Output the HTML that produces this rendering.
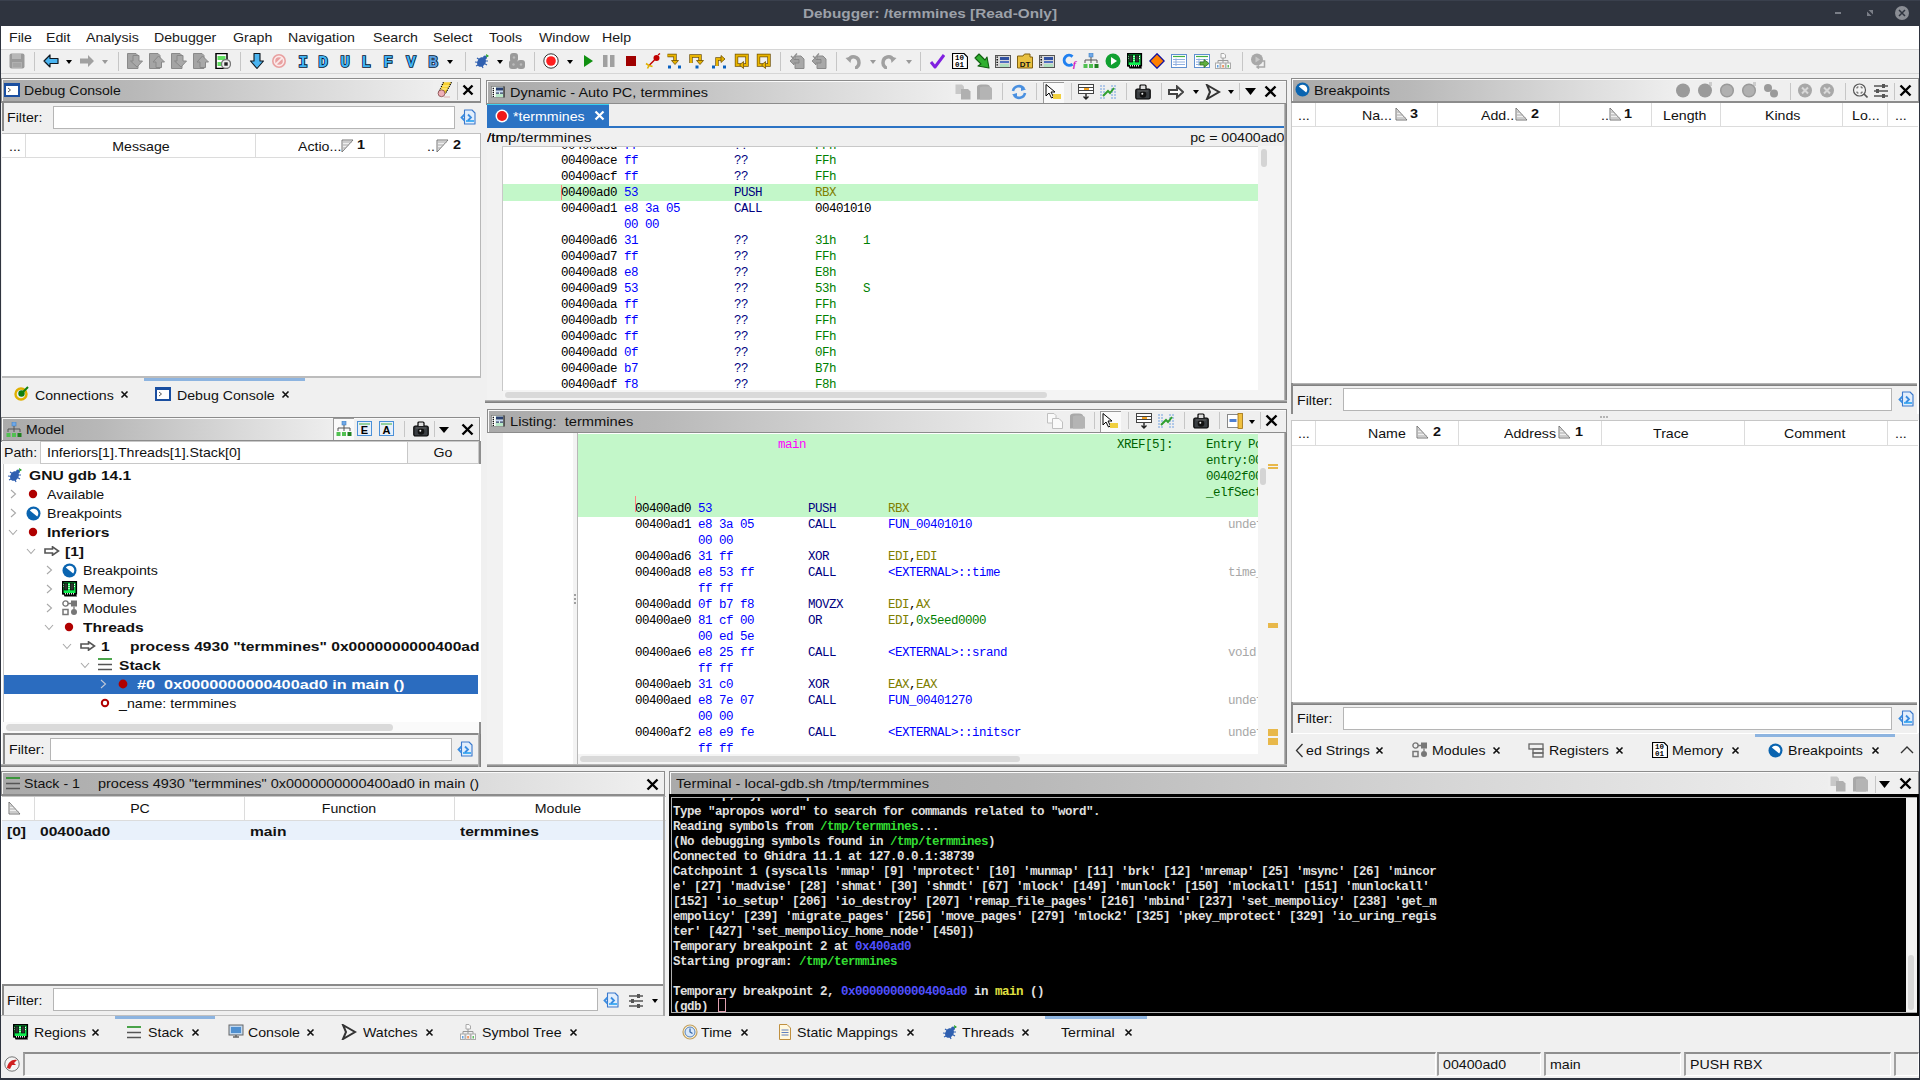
<!DOCTYPE html><html><head><meta charset="utf-8"><style>
html,body{margin:0;padding:0;width:1920px;height:1080px;overflow:hidden;background:#f0f0f0;font-family:"Liberation Sans",sans-serif;}
div,svg{position:absolute;box-sizing:border-box;}
</style></head><body>
<div style="left:0px;top:0px;width:1920px;height:26px;background:#2f343f;"></div>
<div style="left:430px;width:1000px;text-align:center;top:7.00px;font-size:13px;line-height:13px;color:#9da1a9;font-weight:700;font-family:'Liberation Sans', sans-serif;letter-spacing:0px;white-space:pre;transform:scaleX(1.18);transform-origin:50% 0;">Debugger: /termmines [Read-Only]</div>
<div style="left:0px;top:0px;width:1920px;height:1px;background:#3a404d;"></div>
<div style="left:1835px;top:12px;width:6px;height:2px;background:#7a7e87;"></div>
<svg style="left:1866px;top:9px" width="8" height="8" viewBox="0 0 8 8"><path d="M1 7 V2.5 L5.5 7 Z M7 1 V5.5 L2.5 1 Z" fill="#7a7e87"/></svg>
<svg style="left:1894px;top:5px" width="16" height="16" viewBox="0 0 16 16"><circle cx="8" cy="8" r="7" fill="#8a8d94"/><path d="M5 5 L11 11 M11 5 L5 11" stroke="#2f343f" stroke-width="1.5"/></svg>
<div style="left:0px;top:26px;width:1px;height:1054px;background:#2f343f;"></div>
<div style="left:1919px;top:26px;width:1px;height:1054px;background:#2f343f;"></div>
<div style="left:0px;top:1078px;width:1920px;height:2px;background:#2f343f;"></div>
<div style="left:1px;top:26px;width:1918px;height:23px;background:#ffffff;"></div>
<div style="left:9px;top:31.00px;font-size:13px;line-height:13px;color:#1a1a1a;font-weight:400;font-family:'Liberation Sans', sans-serif;letter-spacing:0px;white-space:pre;transform:scaleX(1.09);transform-origin:0 0;">File</div>
<div style="left:46px;top:31.00px;font-size:13px;line-height:13px;color:#1a1a1a;font-weight:400;font-family:'Liberation Sans', sans-serif;letter-spacing:0px;white-space:pre;transform:scaleX(1.09);transform-origin:0 0;">Edit</div>
<div style="left:86px;top:31.00px;font-size:13px;line-height:13px;color:#1a1a1a;font-weight:400;font-family:'Liberation Sans', sans-serif;letter-spacing:0px;white-space:pre;transform:scaleX(1.09);transform-origin:0 0;">Analysis</div>
<div style="left:154px;top:31.00px;font-size:13px;line-height:13px;color:#1a1a1a;font-weight:400;font-family:'Liberation Sans', sans-serif;letter-spacing:0px;white-space:pre;transform:scaleX(1.09);transform-origin:0 0;">Debugger</div>
<div style="left:233px;top:31.00px;font-size:13px;line-height:13px;color:#1a1a1a;font-weight:400;font-family:'Liberation Sans', sans-serif;letter-spacing:0px;white-space:pre;transform:scaleX(1.09);transform-origin:0 0;">Graph</div>
<div style="left:288px;top:31.00px;font-size:13px;line-height:13px;color:#1a1a1a;font-weight:400;font-family:'Liberation Sans', sans-serif;letter-spacing:0px;white-space:pre;transform:scaleX(1.09);transform-origin:0 0;">Navigation</div>
<div style="left:373px;top:31.00px;font-size:13px;line-height:13px;color:#1a1a1a;font-weight:400;font-family:'Liberation Sans', sans-serif;letter-spacing:0px;white-space:pre;transform:scaleX(1.09);transform-origin:0 0;">Search</div>
<div style="left:433px;top:31.00px;font-size:13px;line-height:13px;color:#1a1a1a;font-weight:400;font-family:'Liberation Sans', sans-serif;letter-spacing:0px;white-space:pre;transform:scaleX(1.09);transform-origin:0 0;">Select</div>
<div style="left:489px;top:31.00px;font-size:13px;line-height:13px;color:#1a1a1a;font-weight:400;font-family:'Liberation Sans', sans-serif;letter-spacing:0px;white-space:pre;transform:scaleX(1.09);transform-origin:0 0;">Tools</div>
<div style="left:539px;top:31.00px;font-size:13px;line-height:13px;color:#1a1a1a;font-weight:400;font-family:'Liberation Sans', sans-serif;letter-spacing:0px;white-space:pre;transform:scaleX(1.09);transform-origin:0 0;">Window</div>
<div style="left:602px;top:31.00px;font-size:13px;line-height:13px;color:#1a1a1a;font-weight:400;font-family:'Liberation Sans', sans-serif;letter-spacing:0px;white-space:pre;transform:scaleX(1.09);transform-origin:0 0;">Help</div>
<div style="left:1px;top:49px;width:1918px;height:1px;background:#d6d6d6;"></div>
<div style="left:1px;top:50px;width:1918px;height:23px;background:#f0f0f0;"></div>
<div style="left:1px;top:73px;width:1918px;height:1px;background:#d6d6d6;"></div>
<div style="left:1px;top:78px;width:481px;height:300px;background:#f0f0f0;"></div>
<div style="left:1px;top:78px;width:480px;height:25px;background:#8c8c8c;"></div>
<div style="left:2px;top:79px;width:478px;height:22px;background:#fafafa;"></div>
<div style="left:3px;top:80px;width:477px;height:21px;background:#efefef;"></div>
<div style="left:3px;top:80px;width:430px;height:21px;background:linear-gradient(to right,#aaaaaa 0%,#b8b8b8 30%,#d8d8d8 70%,#eeeeee 100%);"></div>
<div style="left:2px;top:101px;width:479px;height:2px;background:#8c8c8c;"></div>
<div style="left:24px;top:84.00px;font-size:13px;line-height:13px;color:#111;font-weight:400;font-family:'Liberation Sans', sans-serif;letter-spacing:0px;white-space:pre;transform:scaleX(1.08);transform-origin:0 0;">Debug Console</div>
<div style="left:2px;top:103px;width:478px;height:28px;background:#f0f0f0;"></div>
<div style="left:2px;top:103px;width:2px;height:28px;background:#8a8a8a;"></div>
<div style="left:7px;top:111.00px;font-size:13px;line-height:13px;color:#111;font-weight:400;font-family:'Liberation Sans', sans-serif;letter-spacing:0px;white-space:pre;transform:scaleX(1.09);transform-origin:0 0;">Filter:</div>
<div style="left:53px;top:106px;width:402px;height:23px;background:#fff;border:1px solid #b5b5b5;"></div>
<div style="left:2px;top:133px;width:479px;height:245px;background:#fff;border-top:1px solid #c0c0c0;border-right:1px solid #b8b8b8;border-bottom:2px solid #bcbcbc;"></div>
<div style="left:2px;top:134px;width:478px;height:24px;background:#fff;"></div>
<div style="left:2px;top:157px;width:478px;height:1px;background:#dcdcdc;"></div>
<div style="left:25px;top:134px;width:1px;height:23px;background:#dcdcdc;"></div>
<div style="left:255px;top:134px;width:1px;height:23px;background:#dcdcdc;"></div>
<div style="left:384px;top:134px;width:1px;height:23px;background:#dcdcdc;"></div>
<div style="left:9px;top:140.00px;font-size:13px;line-height:13px;color:#111;font-weight:400;font-family:'Liberation Sans', sans-serif;letter-spacing:0px;white-space:pre;transform:scaleX(1.09);transform-origin:0 0;">...</div>
<div style="left:-359px;width:1000px;text-align:center;top:140.00px;font-size:13px;line-height:13px;color:#111;font-weight:400;font-family:'Liberation Sans', sans-serif;letter-spacing:0px;white-space:pre;transform:scaleX(1.09);transform-origin:50% 0;">Message</div>
<div style="left:298px;top:140.00px;font-size:13px;line-height:13px;color:#111;font-weight:400;font-family:'Liberation Sans', sans-serif;letter-spacing:0px;white-space:pre;transform:scaleX(1.09);transform-origin:0 0;">Actio...</div>
<div style="left:427px;top:140.00px;font-size:13px;line-height:13px;color:#111;font-weight:400;font-family:'Liberation Sans', sans-serif;letter-spacing:0px;white-space:pre;transform:scaleX(1.09);transform-origin:0 0;">..</div>
<div style="left:2px;top:378px;width:479px;height:33px;background:#f0f0f0;"></div>
<div style="left:144px;top:378px;width:161px;height:3px;background:#8db4e0;"></div>
<div style="left:35px;top:389.00px;font-size:13px;line-height:13px;color:#111;font-weight:400;font-family:'Liberation Sans', sans-serif;letter-spacing:0px;white-space:pre;transform:scaleX(1.09);transform-origin:0 0;">Connections</div>
<div style="left:177px;top:389.00px;font-size:13px;line-height:13px;color:#111;font-weight:400;font-family:'Liberation Sans', sans-serif;letter-spacing:0px;white-space:pre;transform:scaleX(1.09);transform-origin:0 0;">Debug Console</div>
<div style="left:1px;top:417px;width:480px;height:350px;background:#ffffff;"></div>
<div style="left:1px;top:417px;width:479px;height:25px;background:#8c8c8c;"></div>
<div style="left:2px;top:418px;width:477px;height:22px;background:#fafafa;"></div>
<div style="left:3px;top:419px;width:476px;height:21px;background:#efefef;"></div>
<div style="left:3px;top:419px;width:330px;height:21px;background:linear-gradient(to right,#aaaaaa 0%,#b8b8b8 30%,#d8d8d8 70%,#eeeeee 100%);"></div>
<div style="left:2px;top:440px;width:478px;height:2px;background:#8c8c8c;"></div>
<div style="left:26px;top:423.00px;font-size:13px;line-height:13px;color:#111;font-weight:400;font-family:'Liberation Sans', sans-serif;letter-spacing:0px;white-space:pre;transform:scaleX(1.08);transform-origin:0 0;">Model</div>
<div style="left:2px;top:441px;width:477px;height:23px;background:#f0f0f0;"></div>
<div style="left:4px;top:446.00px;font-size:13px;line-height:13px;color:#111;font-weight:400;font-family:'Liberation Sans', sans-serif;letter-spacing:0px;white-space:pre;transform:scaleX(1.09);transform-origin:0 0;">Path:</div>
<div style="left:40px;top:441px;width:368px;height:23px;background:#fff;border:1px solid #c8c8c8;"></div>
<div style="left:47px;top:446.00px;font-size:13px;line-height:13px;color:#111;font-weight:400;font-family:'Liberation Sans', sans-serif;letter-spacing:0px;white-space:pre;transform:scaleX(1.09);transform-origin:0 0;">Inferiors[1].Threads[1].Stack[0]</div>
<div style="left:407px;top:441px;width:72px;height:23px;background:#f4f4f4;border:1px solid #c8c8c8;"></div>
<div style="left:-57px;width:1000px;text-align:center;top:446.00px;font-size:13px;line-height:13px;color:#111;font-weight:400;font-family:'Liberation Sans', sans-serif;letter-spacing:0px;white-space:pre;transform:scaleX(1.09);transform-origin:50% 0;">Go</div>
<div style="left:2px;top:464px;width:477px;height:270px;background:#fff;"></div>
<div style="left:4px;top:675px;width:474px;height:19px;background:#2b6cbf;"></div>
<div style="left:29px;top:469.00px;font-size:13px;line-height:13px;color:#111;font-weight:700;font-family:'Liberation Sans', sans-serif;letter-spacing:0px;white-space:pre;transform:scaleX(1.2);transform-origin:0 0;">GNU gdb 14.1</div>
<div style="left:47px;top:488.00px;font-size:13px;line-height:13px;color:#111;font-weight:400;font-family:'Liberation Sans', sans-serif;letter-spacing:0px;white-space:pre;transform:scaleX(1.09);transform-origin:0 0;">Available</div>
<div style="left:47px;top:507.00px;font-size:13px;line-height:13px;color:#111;font-weight:400;font-family:'Liberation Sans', sans-serif;letter-spacing:0px;white-space:pre;transform:scaleX(1.09);transform-origin:0 0;">Breakpoints</div>
<div style="left:47px;top:526.00px;font-size:13px;line-height:13px;color:#111;font-weight:700;font-family:'Liberation Sans', sans-serif;letter-spacing:0px;white-space:pre;transform:scaleX(1.2);transform-origin:0 0;">Inferiors</div>
<div style="left:65px;top:545.00px;font-size:13px;line-height:13px;color:#111;font-weight:700;font-family:'Liberation Sans', sans-serif;letter-spacing:0px;white-space:pre;transform:scaleX(1.2);transform-origin:0 0;">[1]</div>
<div style="left:83px;top:564.00px;font-size:13px;line-height:13px;color:#111;font-weight:400;font-family:'Liberation Sans', sans-serif;letter-spacing:0px;white-space:pre;transform:scaleX(1.09);transform-origin:0 0;">Breakpoints</div>
<div style="left:83px;top:583.00px;font-size:13px;line-height:13px;color:#111;font-weight:400;font-family:'Liberation Sans', sans-serif;letter-spacing:0px;white-space:pre;transform:scaleX(1.09);transform-origin:0 0;">Memory</div>
<div style="left:83px;top:602.00px;font-size:13px;line-height:13px;color:#111;font-weight:400;font-family:'Liberation Sans', sans-serif;letter-spacing:0px;white-space:pre;transform:scaleX(1.09);transform-origin:0 0;">Modules</div>
<div style="left:83px;top:621.00px;font-size:13px;line-height:13px;color:#111;font-weight:700;font-family:'Liberation Sans', sans-serif;letter-spacing:0px;white-space:pre;transform:scaleX(1.2);transform-origin:0 0;">Threads</div>
<div style="left:101px;top:640.00px;font-size:13px;line-height:13px;color:#111;font-weight:700;font-family:'Liberation Sans', sans-serif;letter-spacing:0px;white-space:pre;transform:scaleX(1.2);transform-origin:0 0;">1</div>
<div style="left:130px;top:640.00px;font-size:13px;line-height:13px;color:#111;font-weight:700;font-family:'Liberation Sans', sans-serif;letter-spacing:0px;white-space:pre;transform:scaleX(1.2);transform-origin:0 0;">process 4930 &quot;termmines&quot; 0x0000000000400ad0 in main ()</div>
<div style="left:119px;top:659.00px;font-size:13px;line-height:13px;color:#111;font-weight:700;font-family:'Liberation Sans', sans-serif;letter-spacing:0px;white-space:pre;transform:scaleX(1.2);transform-origin:0 0;">Stack</div>
<div style="left:119px;top:697.00px;font-size:13px;line-height:13px;color:#111;font-weight:400;font-family:'Liberation Sans', sans-serif;letter-spacing:0px;white-space:pre;transform:scaleX(1.09);transform-origin:0 0;">_name: termmines</div>
<div style="left:137px;top:678.00px;font-size:13px;line-height:13px;color:#ffffff;font-weight:700;font-family:'Liberation Sans', sans-serif;letter-spacing:0px;white-space:pre;transform:scaleX(1.25);transform-origin:0 0;">#0  0x0000000000400ad0 in main ()</div>
<div style="left:479px;top:464px;width:2px;height:270px;background:#fff;"></div>
<div style="left:2px;top:722px;width:477px;height:12px;background:#fafafa;"></div>
<div style="left:6px;top:724px;width:387px;height:7px;background:#dadada;border-radius:4px;"></div>
<div style="left:2px;top:733px;width:479px;height:31px;background:#f0f0f0;"></div>
<div style="left:3px;top:733px;width:478px;height:2px;background:#8a8a8a;"></div>
<div style="left:3px;top:733px;width:2px;height:31px;background:#8a8a8a;"></div>
<div style="left:1px;top:764px;width:481px;height:3px;background:linear-gradient(to bottom,#c4c4c4,#8a8a8a 60%,#7a7a7a);"></div>
<div style="left:478px;top:733px;width:3px;height:34px;background:linear-gradient(to right,#c4c4c4,#8a8a8a 60%,#7a7a7a);"></div>
<div style="left:479px;top:441px;width:2px;height:293px;background:#8e8e8e;"></div>
<div style="left:9px;top:743.00px;font-size:13px;line-height:13px;color:#111;font-weight:400;font-family:'Liberation Sans', sans-serif;letter-spacing:0px;white-space:pre;transform:scaleX(1.09);transform-origin:0 0;">Filter:</div>
<div style="left:50px;top:738px;width:402px;height:23px;background:#fff;border:1px solid #b5b5b5;"></div>
<div style="left:486px;top:104px;width:801px;height:299px;background:#f0f0f0;"></div>
<div style="left:486px;top:80px;width:801px;height:25px;background:#8c8c8c;"></div>
<div style="left:487px;top:81px;width:799px;height:22px;background:#fafafa;"></div>
<div style="left:488px;top:82px;width:798px;height:21px;background:#efefef;"></div>
<div style="left:488px;top:82px;width:463px;height:21px;background:linear-gradient(to right,#aaaaaa 0%,#b8b8b8 30%,#d8d8d8 70%,#eeeeee 100%);"></div>
<div style="left:487px;top:103px;width:800px;height:2px;background:#8c8c8c;"></div>
<div style="left:510px;top:86.00px;font-size:13px;line-height:13px;color:#111;font-weight:400;font-family:'Liberation Sans', sans-serif;letter-spacing:0px;white-space:pre;transform:scaleX(1.114);transform-origin:0 0;">Dynamic - Auto PC, termmines</div>
<div style="left:487px;top:104px;width:799px;height:24px;background:#efefef;"></div>
<div style="left:487px;top:104px;width:122px;height:24px;background:#2b73c4;"></div>
<div style="left:487px;top:104px;width:122px;height:1px;background:#3cd0f0;"></div>
<div style="left:487px;top:126px;width:799px;height:2px;background:#2b73c4;"></div>
<div style="left:513px;top:110.00px;font-size:13px;line-height:13px;color:#ffffff;font-weight:400;font-family:'Liberation Sans', sans-serif;letter-spacing:0px;white-space:pre;transform:scaleX(1.09);transform-origin:0 0;">*termmines</div>
<div style="left:487px;top:131.00px;font-size:13px;line-height:13px;color:#111;font-weight:400;font-family:'Liberation Sans', sans-serif;letter-spacing:0px;white-space:pre;transform:scaleX(1.168);transform-origin:0 0;">/tmp/termmines</div>
<div style="right:636px;top:131.00px;font-size:13px;line-height:13px;color:#111;font-weight:400;font-family:'Liberation Sans', sans-serif;letter-spacing:0px;white-space:pre;transform:scaleX(1.09);transform-origin:100% 0;">pc = 00400ad0</div>
<div style="left:487px;top:146px;width:16px;height:254px;background:#f2f2f2;"></div>
<div style="left:503px;top:146px;width:755px;height:245px;background:#ffffff;"></div>
<div style="left:1258px;top:146px;width:26px;height:245px;background:#f4f4f4;"></div>
<div style="left:1261px;top:149px;width:6px;height:18px;background:#d4d4d4;border-radius:3px;"></div>
<div style="left:503px;top:390px;width:781px;height:10px;background:#f4f4f4;"></div>
<div style="left:505px;top:392px;width:542px;height:6px;background:#d9d9d9;border-radius:3px;"></div>
<div style="left:503px;top:184px;width:755px;height:17px;background:#c3f7c9;"></div>
<div style="left:561px;top:185px;width:1px;height:15px;background:#ff8080;"></div>
<div style="left:561px;top:140.42px;font-size:12.5px;line-height:12.5px;color:#000;font-weight:400;font-family:'Liberation Mono', monospace;letter-spacing:-0.5px;white-space:pre;transform-origin:0 0;">00400acd</div>
<div style="left:624px;top:140.42px;font-size:12.5px;line-height:12.5px;color:#0000ff;font-weight:400;font-family:'Liberation Mono', monospace;letter-spacing:-0.5px;white-space:pre;transform-origin:0 0;">ff</div>
<div style="left:734px;top:140.42px;font-size:12.5px;line-height:12.5px;color:#000080;font-weight:400;font-family:'Liberation Mono', monospace;letter-spacing:-0.5px;white-space:pre;transform-origin:0 0;">??</div>
<div style="left:815px;top:140.42px;font-size:12.5px;line-height:12.5px;color:#008000;font-weight:400;font-family:'Liberation Mono', monospace;letter-spacing:-0.5px;white-space:pre;transform-origin:0 0;">FFh</div>
<div style="left:561px;top:155.42px;font-size:12.5px;line-height:12.5px;color:#000;font-weight:400;font-family:'Liberation Mono', monospace;letter-spacing:-0.5px;white-space:pre;transform-origin:0 0;">00400ace</div>
<div style="left:624px;top:155.42px;font-size:12.5px;line-height:12.5px;color:#0000ff;font-weight:400;font-family:'Liberation Mono', monospace;letter-spacing:-0.5px;white-space:pre;transform-origin:0 0;">ff</div>
<div style="left:734px;top:155.42px;font-size:12.5px;line-height:12.5px;color:#000080;font-weight:400;font-family:'Liberation Mono', monospace;letter-spacing:-0.5px;white-space:pre;transform-origin:0 0;">??</div>
<div style="left:815px;top:155.42px;font-size:12.5px;line-height:12.5px;color:#008000;font-weight:400;font-family:'Liberation Mono', monospace;letter-spacing:-0.5px;white-space:pre;transform-origin:0 0;">FFh</div>
<div style="left:561px;top:171.42px;font-size:12.5px;line-height:12.5px;color:#000;font-weight:400;font-family:'Liberation Mono', monospace;letter-spacing:-0.5px;white-space:pre;transform-origin:0 0;">00400acf</div>
<div style="left:624px;top:171.42px;font-size:12.5px;line-height:12.5px;color:#0000ff;font-weight:400;font-family:'Liberation Mono', monospace;letter-spacing:-0.5px;white-space:pre;transform-origin:0 0;">ff</div>
<div style="left:734px;top:171.42px;font-size:12.5px;line-height:12.5px;color:#000080;font-weight:400;font-family:'Liberation Mono', monospace;letter-spacing:-0.5px;white-space:pre;transform-origin:0 0;">??</div>
<div style="left:815px;top:171.42px;font-size:12.5px;line-height:12.5px;color:#008000;font-weight:400;font-family:'Liberation Mono', monospace;letter-spacing:-0.5px;white-space:pre;transform-origin:0 0;">FFh</div>
<div style="left:561px;top:187.42px;font-size:12.5px;line-height:12.5px;color:#000;font-weight:400;font-family:'Liberation Mono', monospace;letter-spacing:-0.5px;white-space:pre;transform-origin:0 0;">00400ad0</div>
<div style="left:624px;top:187.42px;font-size:12.5px;line-height:12.5px;color:#0000ff;font-weight:400;font-family:'Liberation Mono', monospace;letter-spacing:-0.5px;white-space:pre;transform-origin:0 0;">53</div>
<div style="left:734px;top:187.42px;font-size:12.5px;line-height:12.5px;color:#000080;font-weight:400;font-family:'Liberation Mono', monospace;letter-spacing:-0.5px;white-space:pre;transform-origin:0 0;">PUSH</div>
<div style="left:815px;top:187.42px;font-size:12.5px;line-height:12.5px;color:#808000;font-weight:400;font-family:'Liberation Mono', monospace;letter-spacing:-0.5px;white-space:pre;transform-origin:0 0;">RBX</div>
<div style="left:561px;top:203.42px;font-size:12.5px;line-height:12.5px;color:#000;font-weight:400;font-family:'Liberation Mono', monospace;letter-spacing:-0.5px;white-space:pre;transform-origin:0 0;">00400ad1</div>
<div style="left:624px;top:203.42px;font-size:12.5px;line-height:12.5px;color:#0000ff;font-weight:400;font-family:'Liberation Mono', monospace;letter-spacing:-0.5px;white-space:pre;transform-origin:0 0;">e8 3a 05</div>
<div style="left:734px;top:203.42px;font-size:12.5px;line-height:12.5px;color:#000080;font-weight:400;font-family:'Liberation Mono', monospace;letter-spacing:-0.5px;white-space:pre;transform-origin:0 0;">CALL</div>
<div style="left:815px;top:203.42px;font-size:12.5px;line-height:12.5px;color:#000;font-weight:400;font-family:'Liberation Mono', monospace;letter-spacing:-0.5px;white-space:pre;transform-origin:0 0;">00401010</div>
<div style="left:624px;top:219.42px;font-size:12.5px;line-height:12.5px;color:#0000ff;font-weight:400;font-family:'Liberation Mono', monospace;letter-spacing:-0.5px;white-space:pre;transform-origin:0 0;">00 00</div>
<div style="left:561px;top:235.42px;font-size:12.5px;line-height:12.5px;color:#000;font-weight:400;font-family:'Liberation Mono', monospace;letter-spacing:-0.5px;white-space:pre;transform-origin:0 0;">00400ad6</div>
<div style="left:624px;top:235.42px;font-size:12.5px;line-height:12.5px;color:#0000ff;font-weight:400;font-family:'Liberation Mono', monospace;letter-spacing:-0.5px;white-space:pre;transform-origin:0 0;">31</div>
<div style="left:734px;top:235.42px;font-size:12.5px;line-height:12.5px;color:#000080;font-weight:400;font-family:'Liberation Mono', monospace;letter-spacing:-0.5px;white-space:pre;transform-origin:0 0;">??</div>
<div style="left:815px;top:235.42px;font-size:12.5px;line-height:12.5px;color:#008000;font-weight:400;font-family:'Liberation Mono', monospace;letter-spacing:-0.5px;white-space:pre;transform-origin:0 0;">31h</div>
<div style="left:863px;top:235.42px;font-size:12.5px;line-height:12.5px;color:#008000;font-weight:400;font-family:'Liberation Mono', monospace;letter-spacing:-0.5px;white-space:pre;transform-origin:0 0;">1</div>
<div style="left:561px;top:251.42px;font-size:12.5px;line-height:12.5px;color:#000;font-weight:400;font-family:'Liberation Mono', monospace;letter-spacing:-0.5px;white-space:pre;transform-origin:0 0;">00400ad7</div>
<div style="left:624px;top:251.42px;font-size:12.5px;line-height:12.5px;color:#0000ff;font-weight:400;font-family:'Liberation Mono', monospace;letter-spacing:-0.5px;white-space:pre;transform-origin:0 0;">ff</div>
<div style="left:734px;top:251.42px;font-size:12.5px;line-height:12.5px;color:#000080;font-weight:400;font-family:'Liberation Mono', monospace;letter-spacing:-0.5px;white-space:pre;transform-origin:0 0;">??</div>
<div style="left:815px;top:251.42px;font-size:12.5px;line-height:12.5px;color:#008000;font-weight:400;font-family:'Liberation Mono', monospace;letter-spacing:-0.5px;white-space:pre;transform-origin:0 0;">FFh</div>
<div style="left:561px;top:267.42px;font-size:12.5px;line-height:12.5px;color:#000;font-weight:400;font-family:'Liberation Mono', monospace;letter-spacing:-0.5px;white-space:pre;transform-origin:0 0;">00400ad8</div>
<div style="left:624px;top:267.42px;font-size:12.5px;line-height:12.5px;color:#0000ff;font-weight:400;font-family:'Liberation Mono', monospace;letter-spacing:-0.5px;white-space:pre;transform-origin:0 0;">e8</div>
<div style="left:734px;top:267.42px;font-size:12.5px;line-height:12.5px;color:#000080;font-weight:400;font-family:'Liberation Mono', monospace;letter-spacing:-0.5px;white-space:pre;transform-origin:0 0;">??</div>
<div style="left:815px;top:267.42px;font-size:12.5px;line-height:12.5px;color:#008000;font-weight:400;font-family:'Liberation Mono', monospace;letter-spacing:-0.5px;white-space:pre;transform-origin:0 0;">E8h</div>
<div style="left:561px;top:283.42px;font-size:12.5px;line-height:12.5px;color:#000;font-weight:400;font-family:'Liberation Mono', monospace;letter-spacing:-0.5px;white-space:pre;transform-origin:0 0;">00400ad9</div>
<div style="left:624px;top:283.42px;font-size:12.5px;line-height:12.5px;color:#0000ff;font-weight:400;font-family:'Liberation Mono', monospace;letter-spacing:-0.5px;white-space:pre;transform-origin:0 0;">53</div>
<div style="left:734px;top:283.42px;font-size:12.5px;line-height:12.5px;color:#000080;font-weight:400;font-family:'Liberation Mono', monospace;letter-spacing:-0.5px;white-space:pre;transform-origin:0 0;">??</div>
<div style="left:815px;top:283.42px;font-size:12.5px;line-height:12.5px;color:#008000;font-weight:400;font-family:'Liberation Mono', monospace;letter-spacing:-0.5px;white-space:pre;transform-origin:0 0;">53h</div>
<div style="left:863px;top:283.42px;font-size:12.5px;line-height:12.5px;color:#008000;font-weight:400;font-family:'Liberation Mono', monospace;letter-spacing:-0.5px;white-space:pre;transform-origin:0 0;">S</div>
<div style="left:561px;top:299.42px;font-size:12.5px;line-height:12.5px;color:#000;font-weight:400;font-family:'Liberation Mono', monospace;letter-spacing:-0.5px;white-space:pre;transform-origin:0 0;">00400ada</div>
<div style="left:624px;top:299.42px;font-size:12.5px;line-height:12.5px;color:#0000ff;font-weight:400;font-family:'Liberation Mono', monospace;letter-spacing:-0.5px;white-space:pre;transform-origin:0 0;">ff</div>
<div style="left:734px;top:299.42px;font-size:12.5px;line-height:12.5px;color:#000080;font-weight:400;font-family:'Liberation Mono', monospace;letter-spacing:-0.5px;white-space:pre;transform-origin:0 0;">??</div>
<div style="left:815px;top:299.42px;font-size:12.5px;line-height:12.5px;color:#008000;font-weight:400;font-family:'Liberation Mono', monospace;letter-spacing:-0.5px;white-space:pre;transform-origin:0 0;">FFh</div>
<div style="left:561px;top:315.42px;font-size:12.5px;line-height:12.5px;color:#000;font-weight:400;font-family:'Liberation Mono', monospace;letter-spacing:-0.5px;white-space:pre;transform-origin:0 0;">00400adb</div>
<div style="left:624px;top:315.42px;font-size:12.5px;line-height:12.5px;color:#0000ff;font-weight:400;font-family:'Liberation Mono', monospace;letter-spacing:-0.5px;white-space:pre;transform-origin:0 0;">ff</div>
<div style="left:734px;top:315.42px;font-size:12.5px;line-height:12.5px;color:#000080;font-weight:400;font-family:'Liberation Mono', monospace;letter-spacing:-0.5px;white-space:pre;transform-origin:0 0;">??</div>
<div style="left:815px;top:315.42px;font-size:12.5px;line-height:12.5px;color:#008000;font-weight:400;font-family:'Liberation Mono', monospace;letter-spacing:-0.5px;white-space:pre;transform-origin:0 0;">FFh</div>
<div style="left:561px;top:331.42px;font-size:12.5px;line-height:12.5px;color:#000;font-weight:400;font-family:'Liberation Mono', monospace;letter-spacing:-0.5px;white-space:pre;transform-origin:0 0;">00400adc</div>
<div style="left:624px;top:331.42px;font-size:12.5px;line-height:12.5px;color:#0000ff;font-weight:400;font-family:'Liberation Mono', monospace;letter-spacing:-0.5px;white-space:pre;transform-origin:0 0;">ff</div>
<div style="left:734px;top:331.42px;font-size:12.5px;line-height:12.5px;color:#000080;font-weight:400;font-family:'Liberation Mono', monospace;letter-spacing:-0.5px;white-space:pre;transform-origin:0 0;">??</div>
<div style="left:815px;top:331.42px;font-size:12.5px;line-height:12.5px;color:#008000;font-weight:400;font-family:'Liberation Mono', monospace;letter-spacing:-0.5px;white-space:pre;transform-origin:0 0;">FFh</div>
<div style="left:561px;top:347.42px;font-size:12.5px;line-height:12.5px;color:#000;font-weight:400;font-family:'Liberation Mono', monospace;letter-spacing:-0.5px;white-space:pre;transform-origin:0 0;">00400add</div>
<div style="left:624px;top:347.42px;font-size:12.5px;line-height:12.5px;color:#0000ff;font-weight:400;font-family:'Liberation Mono', monospace;letter-spacing:-0.5px;white-space:pre;transform-origin:0 0;">0f</div>
<div style="left:734px;top:347.42px;font-size:12.5px;line-height:12.5px;color:#000080;font-weight:400;font-family:'Liberation Mono', monospace;letter-spacing:-0.5px;white-space:pre;transform-origin:0 0;">??</div>
<div style="left:815px;top:347.42px;font-size:12.5px;line-height:12.5px;color:#008000;font-weight:400;font-family:'Liberation Mono', monospace;letter-spacing:-0.5px;white-space:pre;transform-origin:0 0;">0Fh</div>
<div style="left:561px;top:363.42px;font-size:12.5px;line-height:12.5px;color:#000;font-weight:400;font-family:'Liberation Mono', monospace;letter-spacing:-0.5px;white-space:pre;transform-origin:0 0;">00400ade</div>
<div style="left:624px;top:363.42px;font-size:12.5px;line-height:12.5px;color:#0000ff;font-weight:400;font-family:'Liberation Mono', monospace;letter-spacing:-0.5px;white-space:pre;transform-origin:0 0;">b7</div>
<div style="left:734px;top:363.42px;font-size:12.5px;line-height:12.5px;color:#000080;font-weight:400;font-family:'Liberation Mono', monospace;letter-spacing:-0.5px;white-space:pre;transform-origin:0 0;">??</div>
<div style="left:815px;top:363.42px;font-size:12.5px;line-height:12.5px;color:#008000;font-weight:400;font-family:'Liberation Mono', monospace;letter-spacing:-0.5px;white-space:pre;transform-origin:0 0;">B7h</div>
<div style="left:561px;top:379.42px;font-size:12.5px;line-height:12.5px;color:#000;font-weight:400;font-family:'Liberation Mono', monospace;letter-spacing:-0.5px;white-space:pre;transform-origin:0 0;">00400adf</div>
<div style="left:624px;top:379.42px;font-size:12.5px;line-height:12.5px;color:#0000ff;font-weight:400;font-family:'Liberation Mono', monospace;letter-spacing:-0.5px;white-space:pre;transform-origin:0 0;">f8</div>
<div style="left:734px;top:379.42px;font-size:12.5px;line-height:12.5px;color:#000080;font-weight:400;font-family:'Liberation Mono', monospace;letter-spacing:-0.5px;white-space:pre;transform-origin:0 0;">??</div>
<div style="left:815px;top:379.42px;font-size:12.5px;line-height:12.5px;color:#008000;font-weight:400;font-family:'Liberation Mono', monospace;letter-spacing:-0.5px;white-space:pre;transform-origin:0 0;">F8h</div>
<div style="left:503px;top:129px;width:782px;height:17px;background:#f0f0f0;"></div>
<div style="left:487px;top:131.00px;font-size:13px;line-height:13px;color:#111;font-weight:400;font-family:'Liberation Sans', sans-serif;letter-spacing:0px;white-space:pre;transform:scaleX(1.168);transform-origin:0 0;">/tmp/termmines</div>
<div style="right:636px;top:131.00px;font-size:13px;line-height:13px;color:#111;font-weight:400;font-family:'Liberation Sans', sans-serif;letter-spacing:0px;white-space:pre;transform:scaleX(1.09);transform-origin:100% 0;">pc = 00400ad0</div>
<div style="left:503px;top:146px;width:755px;height:1px;background:#c8c8c8;"></div>
<div style="left:502px;top:146px;width:1px;height:245px;background:#c8c8c8;"></div>
<div style="left:1284px;top:104px;width:3px;height:299px;background:linear-gradient(to right,#c4c4c4,#8a8a8a 60%,#7a7a7a);"></div>
<div style="left:485px;top:400px;width:802px;height:3px;background:linear-gradient(to bottom,#c4c4c4,#8a8a8a 60%,#7a7a7a);"></div>
<div style="left:486px;top:433px;width:800px;height:332px;background:#f0f0f0;"></div>
<div style="left:487px;top:409px;width:800px;height:25px;background:#8c8c8c;"></div>
<div style="left:488px;top:410px;width:798px;height:22px;background:#fafafa;"></div>
<div style="left:489px;top:411px;width:797px;height:21px;background:#efefef;"></div>
<div style="left:489px;top:411px;width:556px;height:21px;background:linear-gradient(to right,#aaaaaa 0%,#b8b8b8 30%,#d8d8d8 70%,#eeeeee 100%);"></div>
<div style="left:488px;top:432px;width:799px;height:2px;background:#8c8c8c;"></div>
<div style="left:510px;top:415.00px;font-size:13px;line-height:13px;color:#111;font-weight:400;font-family:'Liberation Sans', sans-serif;letter-spacing:0px;white-space:pre;transform:scaleX(1.13);transform-origin:0 0;">Listing:  termmines</div>
<div style="left:487px;top:433px;width:16px;height:331px;background:#f2f2f2;"></div>
<div style="left:503px;top:433px;width:70px;height:331px;background:#ffffff;"></div>
<div style="left:573px;top:433px;width:4px;height:331px;background:#f3f3f3;"></div>
<div style="left:577px;top:433px;width:1px;height:331px;background:#b8b8b8;"></div>
<div style="left:578px;top:433px;width:680px;height:323px;background:#ffffff;"></div>
<div style="left:578px;top:434px;width:680px;height:83px;background:#c3f7c9;"></div>
<div style="left:1268px;top:464px;width:10px;height:2px;background:#e8b84a;"></div>
<div style="left:1268px;top:467px;width:10px;height:2px;background:#e8b84a;"></div>
<div style="left:1268px;top:623px;width:10px;height:5px;background:#e8b84a;"></div>
<div style="left:1268px;top:729px;width:10px;height:7px;background:#e8b84a;"></div>
<div style="left:1268px;top:738px;width:10px;height:7px;background:#e8b84a;"></div>
<div style="left:778px;top:439.42px;font-size:12.5px;line-height:12.5px;color:#ff00ff;font-weight:400;font-family:'Liberation Mono', monospace;letter-spacing:-0.5px;white-space:pre;transform-origin:0 0;">main</div>
<div style="left:1117px;top:439.42px;font-size:12.5px;line-height:12.5px;color:#006400;font-weight:400;font-family:'Liberation Mono', monospace;letter-spacing:-0.5px;white-space:pre;transform-origin:0 0;">XREF[5]:</div>
<div style="left:1206px;top:439.42px;font-size:12.5px;line-height:12.5px;color:#006400;font-weight:400;font-family:'Liberation Mono', monospace;letter-spacing:-0.5px;white-space:pre;transform-origin:0 0;">Entry Po</div>
<div style="left:1206px;top:455.42px;font-size:12.5px;line-height:12.5px;color:#006400;font-weight:400;font-family:'Liberation Mono', monospace;letter-spacing:-0.5px;white-space:pre;transform-origin:0 0;">entry:00</div>
<div style="left:1206px;top:471.42px;font-size:12.5px;line-height:12.5px;color:#006400;font-weight:400;font-family:'Liberation Mono', monospace;letter-spacing:-0.5px;white-space:pre;transform-origin:0 0;">00402f00</div>
<div style="left:1206px;top:487.42px;font-size:12.5px;line-height:12.5px;color:#006400;font-weight:400;font-family:'Liberation Mono', monospace;letter-spacing:-0.5px;white-space:pre;transform-origin:0 0;">_elfSect</div>
<div style="left:635px;top:503.42px;font-size:12.5px;line-height:12.5px;color:#000;font-weight:400;font-family:'Liberation Mono', monospace;letter-spacing:-0.5px;white-space:pre;transform-origin:0 0;">00400ad0</div>
<div style="left:698px;top:503.42px;font-size:12.5px;line-height:12.5px;color:#0000ff;font-weight:400;font-family:'Liberation Mono', monospace;letter-spacing:-0.5px;white-space:pre;transform-origin:0 0;">53</div>
<div style="left:808px;top:503.42px;font-size:12.5px;line-height:12.5px;color:#000080;font-weight:400;font-family:'Liberation Mono', monospace;letter-spacing:-0.5px;white-space:pre;transform-origin:0 0;">PUSH</div>
<div style="left:888px;top:503.42px;font-size:12.5px;line-height:12.5px;color:#000;font-weight:400;font-family:'Liberation Mono', monospace;letter-spacing:-0.5px;white-space:pre;transform-origin:0 0;"><span style="color:#808000">RBX</span></div>
<div style="left:635px;top:519.42px;font-size:12.5px;line-height:12.5px;color:#000;font-weight:400;font-family:'Liberation Mono', monospace;letter-spacing:-0.5px;white-space:pre;transform-origin:0 0;">00400ad1</div>
<div style="left:698px;top:519.42px;font-size:12.5px;line-height:12.5px;color:#0000ff;font-weight:400;font-family:'Liberation Mono', monospace;letter-spacing:-0.5px;white-space:pre;transform-origin:0 0;">e8 3a 05</div>
<div style="left:808px;top:519.42px;font-size:12.5px;line-height:12.5px;color:#000080;font-weight:400;font-family:'Liberation Mono', monospace;letter-spacing:-0.5px;white-space:pre;transform-origin:0 0;">CALL</div>
<div style="left:888px;top:519.42px;font-size:12.5px;line-height:12.5px;color:#000;font-weight:400;font-family:'Liberation Mono', monospace;letter-spacing:-0.5px;white-space:pre;transform-origin:0 0;"><span style="color:#0000ff">FUN_00401010</span></div>
<div style="left:1228px;top:519.42px;font-size:12.5px;line-height:12.5px;color:#a8a8a8;font-weight:400;font-family:'Liberation Mono', monospace;letter-spacing:-0.5px;white-space:pre;transform-origin:0 0;">undef</div>
<div style="left:698px;top:535.42px;font-size:12.5px;line-height:12.5px;color:#0000ff;font-weight:400;font-family:'Liberation Mono', monospace;letter-spacing:-0.5px;white-space:pre;transform-origin:0 0;">00 00</div>
<div style="left:635px;top:551.42px;font-size:12.5px;line-height:12.5px;color:#000;font-weight:400;font-family:'Liberation Mono', monospace;letter-spacing:-0.5px;white-space:pre;transform-origin:0 0;">00400ad6</div>
<div style="left:698px;top:551.42px;font-size:12.5px;line-height:12.5px;color:#0000ff;font-weight:400;font-family:'Liberation Mono', monospace;letter-spacing:-0.5px;white-space:pre;transform-origin:0 0;">31 ff</div>
<div style="left:808px;top:551.42px;font-size:12.5px;line-height:12.5px;color:#000080;font-weight:400;font-family:'Liberation Mono', monospace;letter-spacing:-0.5px;white-space:pre;transform-origin:0 0;">XOR</div>
<div style="left:888px;top:551.42px;font-size:12.5px;line-height:12.5px;color:#000;font-weight:400;font-family:'Liberation Mono', monospace;letter-spacing:-0.5px;white-space:pre;transform-origin:0 0;"><span style="color:#808000">EDI</span><span style="color:#000">,</span><span style="color:#808000">EDI</span></div>
<div style="left:635px;top:567.42px;font-size:12.5px;line-height:12.5px;color:#000;font-weight:400;font-family:'Liberation Mono', monospace;letter-spacing:-0.5px;white-space:pre;transform-origin:0 0;">00400ad8</div>
<div style="left:698px;top:567.42px;font-size:12.5px;line-height:12.5px;color:#0000ff;font-weight:400;font-family:'Liberation Mono', monospace;letter-spacing:-0.5px;white-space:pre;transform-origin:0 0;">e8 53 ff</div>
<div style="left:808px;top:567.42px;font-size:12.5px;line-height:12.5px;color:#000080;font-weight:400;font-family:'Liberation Mono', monospace;letter-spacing:-0.5px;white-space:pre;transform-origin:0 0;">CALL</div>
<div style="left:888px;top:567.42px;font-size:12.5px;line-height:12.5px;color:#000;font-weight:400;font-family:'Liberation Mono', monospace;letter-spacing:-0.5px;white-space:pre;transform-origin:0 0;"><span style="color:#0000ff">&lt;EXTERNAL&gt;::time</span></div>
<div style="left:1228px;top:567.42px;font-size:12.5px;line-height:12.5px;color:#a8a8a8;font-weight:400;font-family:'Liberation Mono', monospace;letter-spacing:-0.5px;white-space:pre;transform-origin:0 0;">time_</div>
<div style="left:698px;top:583.42px;font-size:12.5px;line-height:12.5px;color:#0000ff;font-weight:400;font-family:'Liberation Mono', monospace;letter-spacing:-0.5px;white-space:pre;transform-origin:0 0;">ff ff</div>
<div style="left:635px;top:599.42px;font-size:12.5px;line-height:12.5px;color:#000;font-weight:400;font-family:'Liberation Mono', monospace;letter-spacing:-0.5px;white-space:pre;transform-origin:0 0;">00400add</div>
<div style="left:698px;top:599.42px;font-size:12.5px;line-height:12.5px;color:#0000ff;font-weight:400;font-family:'Liberation Mono', monospace;letter-spacing:-0.5px;white-space:pre;transform-origin:0 0;">0f b7 f8</div>
<div style="left:808px;top:599.42px;font-size:12.5px;line-height:12.5px;color:#000080;font-weight:400;font-family:'Liberation Mono', monospace;letter-spacing:-0.5px;white-space:pre;transform-origin:0 0;">MOVZX</div>
<div style="left:888px;top:599.42px;font-size:12.5px;line-height:12.5px;color:#000;font-weight:400;font-family:'Liberation Mono', monospace;letter-spacing:-0.5px;white-space:pre;transform-origin:0 0;"><span style="color:#808000">EDI</span><span style="color:#000">,</span><span style="color:#808000">AX</span></div>
<div style="left:635px;top:615.42px;font-size:12.5px;line-height:12.5px;color:#000;font-weight:400;font-family:'Liberation Mono', monospace;letter-spacing:-0.5px;white-space:pre;transform-origin:0 0;">00400ae0</div>
<div style="left:698px;top:615.42px;font-size:12.5px;line-height:12.5px;color:#0000ff;font-weight:400;font-family:'Liberation Mono', monospace;letter-spacing:-0.5px;white-space:pre;transform-origin:0 0;">81 cf 00</div>
<div style="left:808px;top:615.42px;font-size:12.5px;line-height:12.5px;color:#000080;font-weight:400;font-family:'Liberation Mono', monospace;letter-spacing:-0.5px;white-space:pre;transform-origin:0 0;">OR</div>
<div style="left:888px;top:615.42px;font-size:12.5px;line-height:12.5px;color:#000;font-weight:400;font-family:'Liberation Mono', monospace;letter-spacing:-0.5px;white-space:pre;transform-origin:0 0;"><span style="color:#808000">EDI</span><span style="color:#000">,</span><span style="color:#008000">0x5eed0000</span></div>
<div style="left:698px;top:631.42px;font-size:12.5px;line-height:12.5px;color:#0000ff;font-weight:400;font-family:'Liberation Mono', monospace;letter-spacing:-0.5px;white-space:pre;transform-origin:0 0;">00 ed 5e</div>
<div style="left:635px;top:647.42px;font-size:12.5px;line-height:12.5px;color:#000;font-weight:400;font-family:'Liberation Mono', monospace;letter-spacing:-0.5px;white-space:pre;transform-origin:0 0;">00400ae6</div>
<div style="left:698px;top:647.42px;font-size:12.5px;line-height:12.5px;color:#0000ff;font-weight:400;font-family:'Liberation Mono', monospace;letter-spacing:-0.5px;white-space:pre;transform-origin:0 0;">e8 25 ff</div>
<div style="left:808px;top:647.42px;font-size:12.5px;line-height:12.5px;color:#000080;font-weight:400;font-family:'Liberation Mono', monospace;letter-spacing:-0.5px;white-space:pre;transform-origin:0 0;">CALL</div>
<div style="left:888px;top:647.42px;font-size:12.5px;line-height:12.5px;color:#000;font-weight:400;font-family:'Liberation Mono', monospace;letter-spacing:-0.5px;white-space:pre;transform-origin:0 0;"><span style="color:#0000ff">&lt;EXTERNAL&gt;::srand</span></div>
<div style="left:1228px;top:647.42px;font-size:12.5px;line-height:12.5px;color:#a8a8a8;font-weight:400;font-family:'Liberation Mono', monospace;letter-spacing:-0.5px;white-space:pre;transform-origin:0 0;">void</div>
<div style="left:698px;top:663.42px;font-size:12.5px;line-height:12.5px;color:#0000ff;font-weight:400;font-family:'Liberation Mono', monospace;letter-spacing:-0.5px;white-space:pre;transform-origin:0 0;">ff ff</div>
<div style="left:635px;top:679.42px;font-size:12.5px;line-height:12.5px;color:#000;font-weight:400;font-family:'Liberation Mono', monospace;letter-spacing:-0.5px;white-space:pre;transform-origin:0 0;">00400aeb</div>
<div style="left:698px;top:679.42px;font-size:12.5px;line-height:12.5px;color:#0000ff;font-weight:400;font-family:'Liberation Mono', monospace;letter-spacing:-0.5px;white-space:pre;transform-origin:0 0;">31 c0</div>
<div style="left:808px;top:679.42px;font-size:12.5px;line-height:12.5px;color:#000080;font-weight:400;font-family:'Liberation Mono', monospace;letter-spacing:-0.5px;white-space:pre;transform-origin:0 0;">XOR</div>
<div style="left:888px;top:679.42px;font-size:12.5px;line-height:12.5px;color:#000;font-weight:400;font-family:'Liberation Mono', monospace;letter-spacing:-0.5px;white-space:pre;transform-origin:0 0;"><span style="color:#808000">EAX</span><span style="color:#000">,</span><span style="color:#808000">EAX</span></div>
<div style="left:635px;top:695.42px;font-size:12.5px;line-height:12.5px;color:#000;font-weight:400;font-family:'Liberation Mono', monospace;letter-spacing:-0.5px;white-space:pre;transform-origin:0 0;">00400aed</div>
<div style="left:698px;top:695.42px;font-size:12.5px;line-height:12.5px;color:#0000ff;font-weight:400;font-family:'Liberation Mono', monospace;letter-spacing:-0.5px;white-space:pre;transform-origin:0 0;">e8 7e 07</div>
<div style="left:808px;top:695.42px;font-size:12.5px;line-height:12.5px;color:#000080;font-weight:400;font-family:'Liberation Mono', monospace;letter-spacing:-0.5px;white-space:pre;transform-origin:0 0;">CALL</div>
<div style="left:888px;top:695.42px;font-size:12.5px;line-height:12.5px;color:#000;font-weight:400;font-family:'Liberation Mono', monospace;letter-spacing:-0.5px;white-space:pre;transform-origin:0 0;"><span style="color:#0000ff">FUN_00401270</span></div>
<div style="left:1228px;top:695.42px;font-size:12.5px;line-height:12.5px;color:#a8a8a8;font-weight:400;font-family:'Liberation Mono', monospace;letter-spacing:-0.5px;white-space:pre;transform-origin:0 0;">undef</div>
<div style="left:698px;top:711.42px;font-size:12.5px;line-height:12.5px;color:#0000ff;font-weight:400;font-family:'Liberation Mono', monospace;letter-spacing:-0.5px;white-space:pre;transform-origin:0 0;">00 00</div>
<div style="left:635px;top:727.42px;font-size:12.5px;line-height:12.5px;color:#000;font-weight:400;font-family:'Liberation Mono', monospace;letter-spacing:-0.5px;white-space:pre;transform-origin:0 0;">00400af2</div>
<div style="left:698px;top:727.42px;font-size:12.5px;line-height:12.5px;color:#0000ff;font-weight:400;font-family:'Liberation Mono', monospace;letter-spacing:-0.5px;white-space:pre;transform-origin:0 0;">e8 e9 fe</div>
<div style="left:808px;top:727.42px;font-size:12.5px;line-height:12.5px;color:#000080;font-weight:400;font-family:'Liberation Mono', monospace;letter-spacing:-0.5px;white-space:pre;transform-origin:0 0;">CALL</div>
<div style="left:888px;top:727.42px;font-size:12.5px;line-height:12.5px;color:#000;font-weight:400;font-family:'Liberation Mono', monospace;letter-spacing:-0.5px;white-space:pre;transform-origin:0 0;"><span style="color:#0000ff">&lt;EXTERNAL&gt;::initscr</span></div>
<div style="left:1228px;top:727.42px;font-size:12.5px;line-height:12.5px;color:#a8a8a8;font-weight:400;font-family:'Liberation Mono', monospace;letter-spacing:-0.5px;white-space:pre;transform-origin:0 0;">undef</div>
<div style="left:698px;top:743.42px;font-size:12.5px;line-height:12.5px;color:#0000ff;font-weight:400;font-family:'Liberation Mono', monospace;letter-spacing:-0.5px;white-space:pre;transform-origin:0 0;">ff ff</div>
<div style="left:1258px;top:433px;width:26px;height:331px;background:#f4f4f4;"></div>
<div style="left:1260px;top:468px;width:6px;height:17px;background:#d4d4d4;border-radius:3px;"></div>
<div style="left:1268px;top:464px;width:10px;height:2px;background:#e8b84a;"></div>
<div style="left:1268px;top:467px;width:10px;height:2px;background:#e8b84a;"></div>
<div style="left:1268px;top:623px;width:10px;height:5px;background:#e8b84a;"></div>
<div style="left:1268px;top:729px;width:10px;height:7px;background:#e8b84a;"></div>
<div style="left:1268px;top:738px;width:10px;height:7px;background:#e8b84a;"></div>
<div style="left:578px;top:754px;width:706px;height:10px;background:#f4f4f4;"></div>
<div style="left:580px;top:756px;width:440px;height:6px;background:#d9d9d9;border-radius:3px;"></div>
<div style="left:1284px;top:433px;width:3px;height:334px;background:linear-gradient(to right,#c4c4c4,#8a8a8a 60%,#7a7a7a);"></div>
<div style="left:485px;top:764px;width:802px;height:3px;background:linear-gradient(to bottom,#c4c4c4,#8a8a8a 60%,#7a7a7a);"></div>
<div style="left:635px;top:496px;width:1px;height:16px;background:#ff8080;"></div>
<div style="left:1291px;top:103px;width:628px;height:664px;background:#ffffff;"></div>
<div style="left:1291px;top:103px;width:1px;height:280px;background:#c8c8c8;"></div>
<div style="left:1291px;top:420px;width:1px;height:282px;background:#c8c8c8;"></div>
<div style="left:1291px;top:78px;width:628px;height:25px;background:#8c8c8c;"></div>
<div style="left:1292px;top:79px;width:626px;height:22px;background:#fafafa;"></div>
<div style="left:1293px;top:80px;width:625px;height:21px;background:#efefef;"></div>
<div style="left:1293px;top:80px;width:382px;height:21px;background:linear-gradient(to right,#aaaaaa 0%,#b8b8b8 30%,#d8d8d8 70%,#eeeeee 100%);"></div>
<div style="left:1292px;top:101px;width:627px;height:2px;background:#8c8c8c;"></div>
<div style="left:1314px;top:84.00px;font-size:13px;line-height:13px;color:#111;font-weight:400;font-family:'Liberation Sans', sans-serif;letter-spacing:0px;white-space:pre;transform:scaleX(1.107);transform-origin:0 0;">Breakpoints</div>
<div style="left:1292px;top:103px;width:626px;height:24px;background:#ffffff;"></div>
<div style="left:1292px;top:126px;width:626px;height:1px;background:#dcdcdc;"></div>
<div style="left:1315px;top:103px;width:1px;height:23px;background:#dcdcdc;"></div>
<div style="left:1437px;top:103px;width:1px;height:23px;background:#dcdcdc;"></div>
<div style="left:1559px;top:103px;width:1px;height:23px;background:#dcdcdc;"></div>
<div style="left:1651px;top:103px;width:1px;height:23px;background:#dcdcdc;"></div>
<div style="left:1720px;top:103px;width:1px;height:23px;background:#dcdcdc;"></div>
<div style="left:1842px;top:103px;width:1px;height:23px;background:#dcdcdc;"></div>
<div style="left:1887px;top:103px;width:1px;height:23px;background:#dcdcdc;"></div>
<div style="left:1298px;top:109.00px;font-size:13px;line-height:13px;color:#111;font-weight:400;font-family:'Liberation Sans', sans-serif;letter-spacing:0px;white-space:pre;transform:scaleX(1.09);transform-origin:0 0;">...</div>
<div style="left:1362px;top:109.00px;font-size:13px;line-height:13px;color:#111;font-weight:400;font-family:'Liberation Sans', sans-serif;letter-spacing:0px;white-space:pre;transform:scaleX(1.09);transform-origin:0 0;">Na...</div>
<div style="left:1410px;top:107.84px;font-size:12px;line-height:12px;color:#111;font-weight:700;font-family:'Liberation Sans', sans-serif;letter-spacing:0px;white-space:pre;transform:scaleX(1.2);transform-origin:0 0;">3</div>
<div style="left:1481px;top:109.00px;font-size:13px;line-height:13px;color:#111;font-weight:400;font-family:'Liberation Sans', sans-serif;letter-spacing:0px;white-space:pre;transform:scaleX(1.09);transform-origin:0 0;">Add..</div>
<div style="left:1531px;top:107.84px;font-size:12px;line-height:12px;color:#111;font-weight:700;font-family:'Liberation Sans', sans-serif;letter-spacing:0px;white-space:pre;transform:scaleX(1.2);transform-origin:0 0;">2</div>
<div style="left:1601px;top:109.00px;font-size:13px;line-height:13px;color:#111;font-weight:400;font-family:'Liberation Sans', sans-serif;letter-spacing:0px;white-space:pre;transform:scaleX(1.09);transform-origin:0 0;">..</div>
<div style="left:1624px;top:107.84px;font-size:12px;line-height:12px;color:#111;font-weight:700;font-family:'Liberation Sans', sans-serif;letter-spacing:0px;white-space:pre;transform:scaleX(1.2);transform-origin:0 0;">1</div>
<div style="left:1663px;top:109.00px;font-size:13px;line-height:13px;color:#111;font-weight:400;font-family:'Liberation Sans', sans-serif;letter-spacing:0px;white-space:pre;transform:scaleX(1.09);transform-origin:0 0;">Length</div>
<div style="left:1765px;top:109.00px;font-size:13px;line-height:13px;color:#111;font-weight:400;font-family:'Liberation Sans', sans-serif;letter-spacing:0px;white-space:pre;transform:scaleX(1.09);transform-origin:0 0;">Kinds</div>
<div style="left:1852px;top:109.00px;font-size:13px;line-height:13px;color:#111;font-weight:400;font-family:'Liberation Sans', sans-serif;letter-spacing:0px;white-space:pre;transform:scaleX(1.09);transform-origin:0 0;">Lo...</div>
<div style="left:1895px;top:109.00px;font-size:13px;line-height:13px;color:#111;font-weight:400;font-family:'Liberation Sans', sans-serif;letter-spacing:0px;white-space:pre;transform:scaleX(1.09);transform-origin:0 0;">...</div>
<div style="left:1291px;top:383px;width:627px;height:31px;background:#f0f0f0;"></div>
<div style="left:1291px;top:383px;width:627px;height:3px;background:linear-gradient(to bottom,#c4c4c4,#8a8a8a 60%,#7a7a7a);"></div>
<div style="left:1291px;top:383px;width:2px;height:31px;background:#8a8a8a;"></div>
<div style="left:1917px;top:383px;width:1px;height:31px;background:#fff;"></div>
<div style="left:1297px;top:394.00px;font-size:13px;line-height:13px;color:#111;font-weight:400;font-family:'Liberation Sans', sans-serif;letter-spacing:0px;white-space:pre;transform:scaleX(1.09);transform-origin:0 0;">Filter:</div>
<div style="left:1343px;top:388px;width:549px;height:23px;background:#fff;border:1px solid #b5b5b5;"></div>
<div style="left:1291px;top:414px;width:628px;height:6px;background:#f0f0f0;"></div>
<div style="left:1600px;top:416px;width:2px;height:2px;background:#a0a0a0;border-radius:1px;"></div>
<div style="left:1603px;top:416px;width:2px;height:2px;background:#a0a0a0;border-radius:1px;"></div>
<div style="left:1606px;top:416px;width:2px;height:2px;background:#a0a0a0;border-radius:1px;"></div>
<div style="left:1291px;top:420px;width:627px;height:1px;background:#c6c6c6;"></div>
<div style="left:1292px;top:421px;width:626px;height:25px;background:#ffffff;"></div>
<div style="left:1292px;top:445px;width:626px;height:1px;background:#dcdcdc;"></div>
<div style="left:1315px;top:421px;width:1px;height:24px;background:#dcdcdc;"></div>
<div style="left:1458px;top:421px;width:1px;height:24px;background:#dcdcdc;"></div>
<div style="left:1601px;top:421px;width:1px;height:24px;background:#dcdcdc;"></div>
<div style="left:1744px;top:421px;width:1px;height:24px;background:#dcdcdc;"></div>
<div style="left:1887px;top:421px;width:1px;height:24px;background:#dcdcdc;"></div>
<div style="left:1298px;top:427.00px;font-size:13px;line-height:13px;color:#111;font-weight:400;font-family:'Liberation Sans', sans-serif;letter-spacing:0px;white-space:pre;transform:scaleX(1.09);transform-origin:0 0;">...</div>
<div style="left:1368px;top:427.00px;font-size:13px;line-height:13px;color:#111;font-weight:400;font-family:'Liberation Sans', sans-serif;letter-spacing:0px;white-space:pre;transform:scaleX(1.09);transform-origin:0 0;">Name</div>
<div style="left:1433px;top:425.84px;font-size:12px;line-height:12px;color:#111;font-weight:700;font-family:'Liberation Sans', sans-serif;letter-spacing:0px;white-space:pre;transform:scaleX(1.2);transform-origin:0 0;">2</div>
<div style="left:1504px;top:427.00px;font-size:13px;line-height:13px;color:#111;font-weight:400;font-family:'Liberation Sans', sans-serif;letter-spacing:0px;white-space:pre;transform:scaleX(1.09);transform-origin:0 0;">Address</div>
<div style="left:1575px;top:425.84px;font-size:12px;line-height:12px;color:#111;font-weight:700;font-family:'Liberation Sans', sans-serif;letter-spacing:0px;white-space:pre;transform:scaleX(1.2);transform-origin:0 0;">1</div>
<div style="left:1653px;top:427.00px;font-size:13px;line-height:13px;color:#111;font-weight:400;font-family:'Liberation Sans', sans-serif;letter-spacing:0px;white-space:pre;transform:scaleX(1.09);transform-origin:0 0;">Trace</div>
<div style="left:1784px;top:427.00px;font-size:13px;line-height:13px;color:#111;font-weight:400;font-family:'Liberation Sans', sans-serif;letter-spacing:0px;white-space:pre;transform:scaleX(1.09);transform-origin:0 0;">Comment</div>
<div style="left:1895px;top:427.00px;font-size:13px;line-height:13px;color:#111;font-weight:400;font-family:'Liberation Sans', sans-serif;letter-spacing:0px;white-space:pre;transform:scaleX(1.09);transform-origin:0 0;">...</div>
<div style="left:1291px;top:702px;width:627px;height:31px;background:#f0f0f0;"></div>
<div style="left:1291px;top:702px;width:627px;height:3px;background:linear-gradient(to bottom,#c4c4c4,#8a8a8a 60%,#7a7a7a);"></div>
<div style="left:1291px;top:702px;width:2px;height:31px;background:#8a8a8a;"></div>
<div style="left:1917px;top:702px;width:1px;height:31px;background:#fff;"></div>
<div style="left:1297px;top:712.00px;font-size:13px;line-height:13px;color:#111;font-weight:400;font-family:'Liberation Sans', sans-serif;letter-spacing:0px;white-space:pre;transform:scaleX(1.09);transform-origin:0 0;">Filter:</div>
<div style="left:1343px;top:707px;width:549px;height:23px;background:#fff;border:1px solid #b5b5b5;"></div>
<div style="left:1291px;top:733px;width:628px;height:35px;background:#f0f0f0;"></div>
<div style="left:1291px;top:733px;width:627px;height:1px;background:#ffffff;"></div>
<div style="left:1755px;top:734px;width:140px;height:3px;background:#8db4e0;"></div>
<div style="left:1306px;top:744.00px;font-size:13px;line-height:13px;color:#111;font-weight:400;font-family:'Liberation Sans', sans-serif;letter-spacing:0px;white-space:pre;transform:scaleX(1.09);transform-origin:0 0;">ed Strings</div>
<div style="left:1432px;top:744.00px;font-size:13px;line-height:13px;color:#111;font-weight:400;font-family:'Liberation Sans', sans-serif;letter-spacing:0px;white-space:pre;transform:scaleX(1.09);transform-origin:0 0;">Modules</div>
<div style="left:1549px;top:744.00px;font-size:13px;line-height:13px;color:#111;font-weight:400;font-family:'Liberation Sans', sans-serif;letter-spacing:0px;white-space:pre;transform:scaleX(1.09);transform-origin:0 0;">Registers</div>
<div style="left:1672px;top:744.00px;font-size:13px;line-height:13px;color:#111;font-weight:400;font-family:'Liberation Sans', sans-serif;letter-spacing:0px;white-space:pre;transform:scaleX(1.09);transform-origin:0 0;">Memory</div>
<div style="left:1788px;top:744.00px;font-size:13px;line-height:13px;color:#111;font-weight:400;font-family:'Liberation Sans', sans-serif;letter-spacing:0px;white-space:pre;transform:scaleX(1.09);transform-origin:0 0;">Breakpoints</div>
<div style="left:1px;top:796px;width:663px;height:220px;background:#ffffff;"></div>
<div style="left:1px;top:771px;width:664px;height:25px;background:#8c8c8c;"></div>
<div style="left:2px;top:772px;width:662px;height:22px;background:#fafafa;"></div>
<div style="left:3px;top:773px;width:661px;height:21px;background:#efefef;"></div>
<div style="left:3px;top:773px;width:637px;height:21px;background:linear-gradient(to right,#aaaaaa 0%,#b8b8b8 30%,#d8d8d8 70%,#eeeeee 100%);"></div>
<div style="left:2px;top:794px;width:663px;height:2px;background:#8c8c8c;"></div>
<div style="left:24px;top:777.00px;font-size:13px;line-height:13px;color:#111;font-weight:400;font-family:'Liberation Sans', sans-serif;letter-spacing:0px;white-space:pre;transform:scaleX(1.09);transform-origin:0 0;">Stack - 1</div>
<div style="left:98px;top:777.00px;font-size:13px;line-height:13px;color:#111;font-weight:400;font-family:'Liberation Sans', sans-serif;letter-spacing:0px;white-space:pre;transform:scaleX(1.113);transform-origin:0 0;">process 4930 &quot;termmines&quot; 0x0000000000400ad0 in main ()</div>
<div style="left:2px;top:796px;width:664px;height:1px;background:#c6c6c6;"></div>
<div style="left:2px;top:797px;width:664px;height:24px;background:#ffffff;"></div>
<div style="left:2px;top:820px;width:664px;height:1px;background:#dcdcdc;"></div>
<div style="left:34px;top:797px;width:1px;height:23px;background:#dcdcdc;"></div>
<div style="left:244px;top:797px;width:1px;height:23px;background:#dcdcdc;"></div>
<div style="left:454px;top:797px;width:1px;height:23px;background:#dcdcdc;"></div>
<div style="left:-360px;width:1000px;text-align:center;top:802.00px;font-size:13px;line-height:13px;color:#111;font-weight:400;font-family:'Liberation Sans', sans-serif;letter-spacing:0px;white-space:pre;transform:scaleX(1.09);transform-origin:50% 0;">PC</div>
<div style="left:-151px;width:1000px;text-align:center;top:802.00px;font-size:13px;line-height:13px;color:#111;font-weight:400;font-family:'Liberation Sans', sans-serif;letter-spacing:0px;white-space:pre;transform:scaleX(1.09);transform-origin:50% 0;">Function</div>
<div style="left:58px;width:1000px;text-align:center;top:802.00px;font-size:13px;line-height:13px;color:#111;font-weight:400;font-family:'Liberation Sans', sans-serif;letter-spacing:0px;white-space:pre;transform:scaleX(1.09);transform-origin:50% 0;">Module</div>
<div style="left:2px;top:821px;width:664px;height:19px;background:#e9f1fb;"></div>
<div style="left:7px;top:825.00px;font-size:13px;line-height:13px;color:#111;font-weight:700;font-family:'Liberation Sans', sans-serif;letter-spacing:0px;white-space:pre;transform:scaleX(1.2);transform-origin:0 0;">[0]</div>
<div style="left:40px;top:825.00px;font-size:13px;line-height:13px;color:#111;font-weight:700;font-family:'Liberation Sans', sans-serif;letter-spacing:0px;white-space:pre;transform:scaleX(1.2);transform-origin:0 0;">00400ad0</div>
<div style="left:250px;top:825.00px;font-size:13px;line-height:13px;color:#111;font-weight:700;font-family:'Liberation Sans', sans-serif;letter-spacing:0px;white-space:pre;transform:scaleX(1.2);transform-origin:0 0;">main</div>
<div style="left:460px;top:825.00px;font-size:13px;line-height:13px;color:#111;font-weight:700;font-family:'Liberation Sans', sans-serif;letter-spacing:0px;white-space:pre;transform:scaleX(1.2);transform-origin:0 0;">termmines</div>
<div style="left:2px;top:984px;width:662px;height:31px;background:#f0f0f0;"></div>
<div style="left:2px;top:984px;width:662px;height:2px;background:#8a8a8a;"></div>
<div style="left:2px;top:984px;width:2px;height:31px;background:#8a8a8a;"></div>
<div style="left:1px;top:1015px;width:664px;height:1px;background:#c0c0c0;"></div>
<div style="left:663px;top:796px;width:2px;height:220px;background:#a8a8a8;"></div>
<div style="left:7px;top:994.00px;font-size:13px;line-height:13px;color:#111;font-weight:400;font-family:'Liberation Sans', sans-serif;letter-spacing:0px;white-space:pre;transform:scaleX(1.09);transform-origin:0 0;">Filter:</div>
<div style="left:53px;top:988px;width:545px;height:23px;background:#fff;border:1px solid #b5b5b5;"></div>
<div style="left:1px;top:1016px;width:666px;height:32px;background:#f0f0f0;"></div>
<div style="left:115px;top:1016px;width:100px;height:3px;background:#8db4e0;"></div>
<div style="left:34px;top:1026.00px;font-size:13px;line-height:13px;color:#111;font-weight:400;font-family:'Liberation Sans', sans-serif;letter-spacing:0px;white-space:pre;transform:scaleX(1.09);transform-origin:0 0;">Regions</div>
<div style="left:148px;top:1026.00px;font-size:13px;line-height:13px;color:#111;font-weight:400;font-family:'Liberation Sans', sans-serif;letter-spacing:0px;white-space:pre;transform:scaleX(1.09);transform-origin:0 0;">Stack</div>
<div style="left:248px;top:1026.00px;font-size:13px;line-height:13px;color:#111;font-weight:400;font-family:'Liberation Sans', sans-serif;letter-spacing:0px;white-space:pre;transform:scaleX(1.09);transform-origin:0 0;">Console</div>
<div style="left:363px;top:1026.00px;font-size:13px;line-height:13px;color:#111;font-weight:400;font-family:'Liberation Sans', sans-serif;letter-spacing:0px;white-space:pre;transform:scaleX(1.09);transform-origin:0 0;">Watches</div>
<div style="left:482px;top:1026.00px;font-size:13px;line-height:13px;color:#111;font-weight:400;font-family:'Liberation Sans', sans-serif;letter-spacing:0px;white-space:pre;transform:scaleX(1.09);transform-origin:0 0;">Symbol Tree</div>
<div style="left:669px;top:771px;width:1250px;height:25px;background:#8c8c8c;"></div>
<div style="left:670px;top:772px;width:1248px;height:22px;background:#fafafa;"></div>
<div style="left:671px;top:773px;width:1247px;height:21px;background:#efefef;"></div>
<div style="left:671px;top:773px;width:1157px;height:21px;background:linear-gradient(to right,#aaaaaa 0%,#b8b8b8 30%,#d8d8d8 70%,#eeeeee 100%);"></div>
<div style="left:670px;top:794px;width:1249px;height:2px;background:#8c8c8c;"></div>
<div style="left:676px;top:777.00px;font-size:13px;line-height:13px;color:#111;font-weight:400;font-family:'Liberation Sans', sans-serif;letter-spacing:0px;white-space:pre;transform:scaleX(1.13);transform-origin:0 0;">Terminal - local-gdb.sh /tmp/termmines</div>
<div style="left:669px;top:794px;width:1250px;height:222px;background:#000000;"></div>
<div style="left:671px;top:797px;width:1px;height:216px;background:#b0b0b0;"></div>
<div style="left:671px;top:797px;width:1246px;height:1px;background:#b0b0b0;"></div>
<div style="left:1906px;top:797px;width:11px;height:216px;background:#f2f2f2;"></div>
<div style="left:1908px;top:955px;width:6px;height:55px;background:#d8d8d8;border-radius:3px;"></div>
<div style="left:669px;top:797px;width:1238px;height:8px;overflow:hidden"><div style="left:4px;top:-8.5px;font-family:'Liberation Mono',monospace;font-size:12.5px;line-height:12.5px;letter-spacing:-0.5px;font-weight:700;color:#e0e0e0;white-space:pre">For help, type "help".</div></div>
<div style="left:673px;top:806.42px;font-size:12.5px;line-height:12.5px;color:#000;font-weight:700;font-family:'Liberation Mono', monospace;letter-spacing:-0.5px;white-space:pre;transform-origin:0 0;"><span style="color:#e0e0e0">Type &quot;apropos word&quot; to search for commands related to &quot;word&quot;.</span></div>
<div style="left:673px;top:821.42px;font-size:12.5px;line-height:12.5px;color:#000;font-weight:700;font-family:'Liberation Mono', monospace;letter-spacing:-0.5px;white-space:pre;transform-origin:0 0;"><span style="color:#e0e0e0">Reading symbols from </span><span style="color:#33dd33">/tmp/termmines</span><span style="color:#e0e0e0">...</span></div>
<div style="left:673px;top:836.42px;font-size:12.5px;line-height:12.5px;color:#000;font-weight:700;font-family:'Liberation Mono', monospace;letter-spacing:-0.5px;white-space:pre;transform-origin:0 0;"><span style="color:#e0e0e0">(No debugging symbols found in </span><span style="color:#33dd33">/tmp/termmines</span><span style="color:#e0e0e0">)</span></div>
<div style="left:673px;top:851.42px;font-size:12.5px;line-height:12.5px;color:#000;font-weight:700;font-family:'Liberation Mono', monospace;letter-spacing:-0.5px;white-space:pre;transform-origin:0 0;"><span style="color:#e0e0e0">Connected to Ghidra 11.1 at 127.0.0.1:38739</span></div>
<div style="left:673px;top:866.42px;font-size:12.5px;line-height:12.5px;color:#000;font-weight:700;font-family:'Liberation Mono', monospace;letter-spacing:-0.5px;white-space:pre;transform-origin:0 0;"><span style="color:#e0e0e0">Catchpoint 1 (syscalls &#x27;mmap&#x27; [9] &#x27;mprotect&#x27; [10] &#x27;munmap&#x27; [11] &#x27;brk&#x27; [12] &#x27;mremap&#x27; [25] &#x27;msync&#x27; [26] &#x27;mincor</span></div>
<div style="left:673px;top:881.42px;font-size:12.5px;line-height:12.5px;color:#000;font-weight:700;font-family:'Liberation Mono', monospace;letter-spacing:-0.5px;white-space:pre;transform-origin:0 0;"><span style="color:#e0e0e0">e&#x27; [27] &#x27;madvise&#x27; [28] &#x27;shmat&#x27; [30] &#x27;shmdt&#x27; [67] &#x27;mlock&#x27; [149] &#x27;munlock&#x27; [150] &#x27;mlockall&#x27; [151] &#x27;munlockall&#x27;</span></div>
<div style="left:673px;top:896.42px;font-size:12.5px;line-height:12.5px;color:#000;font-weight:700;font-family:'Liberation Mono', monospace;letter-spacing:-0.5px;white-space:pre;transform-origin:0 0;"><span style="color:#e0e0e0">[152] &#x27;io_setup&#x27; [206] &#x27;io_destroy&#x27; [207] &#x27;remap_file_pages&#x27; [216] &#x27;mbind&#x27; [237] &#x27;set_mempolicy&#x27; [238] &#x27;get_m</span></div>
<div style="left:673px;top:911.42px;font-size:12.5px;line-height:12.5px;color:#000;font-weight:700;font-family:'Liberation Mono', monospace;letter-spacing:-0.5px;white-space:pre;transform-origin:0 0;"><span style="color:#e0e0e0">empolicy&#x27; [239] &#x27;migrate_pages&#x27; [256] &#x27;move_pages&#x27; [279] &#x27;mlock2&#x27; [325] &#x27;pkey_mprotect&#x27; [329] &#x27;io_uring_regis</span></div>
<div style="left:673px;top:926.42px;font-size:12.5px;line-height:12.5px;color:#000;font-weight:700;font-family:'Liberation Mono', monospace;letter-spacing:-0.5px;white-space:pre;transform-origin:0 0;"><span style="color:#e0e0e0">ter&#x27; [427] &#x27;set_mempolicy_home_node&#x27; [450])</span></div>
<div style="left:673px;top:941.42px;font-size:12.5px;line-height:12.5px;color:#000;font-weight:700;font-family:'Liberation Mono', monospace;letter-spacing:-0.5px;white-space:pre;transform-origin:0 0;"><span style="color:#e0e0e0">Temporary breakpoint 2 at </span><span style="color:#5050ff">0x400ad0</span></div>
<div style="left:673px;top:956.42px;font-size:12.5px;line-height:12.5px;color:#000;font-weight:700;font-family:'Liberation Mono', monospace;letter-spacing:-0.5px;white-space:pre;transform-origin:0 0;"><span style="color:#e0e0e0">Starting program: </span><span style="color:#33dd33">/tmp/termmines</span></div>
<div style="left:673px;top:986.42px;font-size:12.5px;line-height:12.5px;color:#000;font-weight:700;font-family:'Liberation Mono', monospace;letter-spacing:-0.5px;white-space:pre;transform-origin:0 0;"><span style="color:#e0e0e0">Temporary breakpoint 2, </span><span style="color:#5050ff">0x0000000000400ad0</span><span style="color:#e0e0e0"> in </span><span style="color:#e0e040">main</span><span style="color:#e0e0e0"> ()</span></div>
<div style="left:673px;top:1001.42px;font-size:12.5px;line-height:12.5px;color:#000;font-weight:700;font-family:'Liberation Mono', monospace;letter-spacing:-0.5px;white-space:pre;transform-origin:0 0;"><span style="color:#e0e0e0">(gdb) </span></div>
<div style="left:669px;top:794px;width:1250px;height:3px;background:#000;"></div>
<div style="left:671px;top:797px;width:1246px;height:1px;background:#b0b0b0;"></div>
<div style="left:671px;top:797px;width:1px;height:216px;background:#b0b0b0;"></div>
<div style="left:718px;top:998px;width:8px;height:14px;border:1px solid #e0a0b0;"></div>
<div style="left:671px;top:1012px;width:1246px;height:1px;background:#b0b0b0;"></div>
<div style="left:669px;top:1013px;width:1250px;height:3px;background:#000;"></div>
<div style="left:669px;top:1016px;width:1250px;height:32px;background:#f0f0f0;"></div>
<div style="left:1045px;top:1016px;width:102px;height:3px;background:#8db4e0;"></div>
<div style="left:701px;top:1026.00px;font-size:13px;line-height:13px;color:#111;font-weight:400;font-family:'Liberation Sans', sans-serif;letter-spacing:0px;white-space:pre;transform:scaleX(1.09);transform-origin:0 0;">Time</div>
<div style="left:797px;top:1026.00px;font-size:13px;line-height:13px;color:#111;font-weight:400;font-family:'Liberation Sans', sans-serif;letter-spacing:0px;white-space:pre;transform:scaleX(1.09);transform-origin:0 0;">Static Mappings</div>
<div style="left:962px;top:1026.00px;font-size:13px;line-height:13px;color:#111;font-weight:400;font-family:'Liberation Sans', sans-serif;letter-spacing:0px;white-space:pre;transform:scaleX(1.09);transform-origin:0 0;">Threads</div>
<div style="left:1061px;top:1026.00px;font-size:13px;line-height:13px;color:#111;font-weight:400;font-family:'Liberation Sans', sans-serif;letter-spacing:0px;white-space:pre;transform:scaleX(1.09);transform-origin:0 0;">Terminal</div>
<div style="left:1px;top:1048px;width:1918px;height:30px;background:#f0f0f0;"></div>
<div style="left:23px;top:1052px;width:1413px;height:24px;border-top:2px solid #8e8e8e;border-left:2px solid #a0a0a0;border-bottom:1px solid #fff;border-right:1px solid #fff;"></div>
<div style="left:1437px;top:1052px;width:104px;height:24px;border-top:2px solid #8e8e8e;border-left:2px solid #a0a0a0;border-bottom:1px solid #fff;border-right:1px solid #fff;"></div>
<div style="left:1443px;top:1058.00px;font-size:13px;line-height:13px;color:#111;font-weight:400;font-family:'Liberation Sans', sans-serif;letter-spacing:0px;white-space:pre;transform:scaleX(1.09);transform-origin:0 0;">00400ad0</div>
<div style="left:1544px;top:1052px;width:137px;height:24px;border-top:2px solid #8e8e8e;border-left:2px solid #a0a0a0;border-bottom:1px solid #fff;border-right:1px solid #fff;"></div>
<div style="left:1550px;top:1058.00px;font-size:13px;line-height:13px;color:#111;font-weight:400;font-family:'Liberation Sans', sans-serif;letter-spacing:0px;white-space:pre;transform:scaleX(1.09);transform-origin:0 0;">main</div>
<div style="left:1684px;top:1052px;width:207px;height:24px;border-top:2px solid #8e8e8e;border-left:2px solid #a0a0a0;border-bottom:1px solid #fff;border-right:1px solid #fff;"></div>
<div style="left:1690px;top:1058.00px;font-size:13px;line-height:13px;color:#111;font-weight:400;font-family:'Liberation Sans', sans-serif;letter-spacing:0px;white-space:pre;transform:scaleX(1.09);transform-origin:0 0;">PUSH RBX</div>
<div style="left:1894px;top:1052px;width:25px;height:24px;border-top:2px solid #8e8e8e;border-left:2px solid #a0a0a0;border-bottom:1px solid #fff;border-right:1px solid #fff;"></div>
<svg style="left:9px;top:53px" width="16" height="16" viewBox="0 0 16 16"><rect x="0.5" y="0.5" width="15" height="15" rx="2" fill="#9a9a9a"/><rect x="3" y="1" width="9" height="5" fill="#b8b8b8"/><rect x="3" y="9" width="10" height="6" fill="#b0b0b0"/><path d="M4 11H12M4 13H12" stroke="#9a9a9a" stroke-width="1"/></svg>
<div style="left:34px;top:52px;width:1px;height:19px;background:#c6c6c6;"></div>
<svg style="left:43px;top:53px" width="16" height="16" viewBox="0 0 16 16"><path d="M1 8 L7 2 V5.5 H15 V10.5 H7 V14 Z" fill="#4ab4f0" stroke="#101820" stroke-width="1.2" stroke-linejoin="round"/></svg>
<svg style="left:66px;top:60px" width="6" height="4" viewBox="0 0 6 4"><path d="M0 0 H6 L3.0 4 Z" fill="#000"/></svg>
<svg style="left:79px;top:53px" width="16" height="16" viewBox="0 0 16 16"><path d="M15 8 L9 2 V5.5 H1 V10.5 H9 V14 Z" fill="#a0a0a0" stroke="none" stroke-width="1"/></svg>
<svg style="left:102px;top:60px" width="6" height="4" viewBox="0 0 6 4"><path d="M0 0 H6 L3.0 4 Z" fill="#999"/></svg>
<div style="left:118px;top:52px;width:1px;height:19px;background:#c6c6c6;"></div>
<svg style="left:127px;top:53px" width="16" height="16" viewBox="0 0 16 16"><path d="M0.5 0.5 H9 L11 2.5 V15.5 H0.5 Z" fill="#a4a4a4" stroke="#8a8a8a"/><path d="M6 2.5 H12 V8 H15.5 L10 14 L3.5 8 H6 Z" fill="#a8a8a8" stroke="#888" stroke-width="1"/></svg>
<svg style="left:149px;top:53px" width="16" height="16" viewBox="0 0 16 16"><path d="M0.5 0.5 H9 L11 2.5 V15.5 H0.5 Z" fill="#a4a4a4" stroke="#8a8a8a"/><path d="M4 9 L9.5 3 L15.5 9 H12.5 V14.5 H7 V9 Z" fill="#a8a8a8" stroke="#888" stroke-width="1"/></svg>
<svg style="left:171px;top:53px" width="16" height="16" viewBox="0 0 16 16"><path d="M0.5 0.5 H9 L11 2.5 V15.5 H0.5 Z" fill="#a4a4a4" stroke="#8a8a8a"/><path d="M6 2.5 H12 V8 H15.5 L10 14 L3.5 8 H6 Z" fill="#a8a8a8" stroke="#888" stroke-width="1"/></svg>
<svg style="left:193px;top:53px" width="16" height="16" viewBox="0 0 16 16"><path d="M0.5 0.5 H9 L11 2.5 V15.5 H0.5 Z" fill="#a4a4a4" stroke="#8a8a8a"/><path d="M4 9 L9.5 3 L15.5 9 H12.5 V14.5 H7 V9 Z" fill="#a8a8a8" stroke="#888" stroke-width="1"/></svg>
<svg style="left:215px;top:53px" width="16" height="16" viewBox="0 0 16 16"><rect x="1" y="0.5" width="11" height="15" fill="#fff" stroke="#000" stroke-width="1.5"/><rect x="2.5" y="3" width="8" height="4" fill="#60e060"/><rect x="2.5" y="9" width="6" height="4" fill="#60e060"/><circle cx="11" cy="11" r="4.5" fill="#eee" stroke="#777" stroke-width="1.3"/><rect x="9.3" y="9.3" width="3.4" height="3.4" fill="#222"/></svg>
<div style="left:240px;top:52px;width:1px;height:19px;background:#c6c6c6;"></div>
<svg style="left:249px;top:53px" width="16" height="16" viewBox="0 0 16 16"><path d="M5 0.5 H11 V8 H14.5 L8 15.5 L1.5 8 H5 Z" fill="#4ab4f0" stroke="#101820" stroke-width="1.1" stroke-linejoin="round"/></svg>
<svg style="left:271px;top:53px" width="16" height="16" viewBox="0 0 16 16"><circle cx="8" cy="8" r="7" fill="#e8a0a0"/><circle cx="8" cy="8" r="4.6" fill="none" stroke="#fbeaea" stroke-width="1.6"/><path d="M4.8 11.2 L11.2 4.8" stroke="#fbeaea" stroke-width="1.8"/></svg>
<svg style="left:295px;top:53px" width="16" height="16" viewBox="0 0 16 16"><text x="8" y="14" text-anchor="middle" font-family="Liberation Mono" font-weight="700" font-size="16" fill="#40b4f4" stroke="#001030" stroke-width="1.6" paint-order="stroke">I</text></svg>
<svg style="left:315px;top:53px" width="16" height="16" viewBox="0 0 16 16"><text x="8" y="14" text-anchor="middle" font-family="Liberation Mono" font-weight="700" font-size="16" fill="#40b4f4" stroke="#001030" stroke-width="1.6" paint-order="stroke">D</text></svg>
<svg style="left:337px;top:53px" width="16" height="16" viewBox="0 0 16 16"><text x="8" y="14" text-anchor="middle" font-family="Liberation Mono" font-weight="700" font-size="16" fill="#40b4f4" stroke="#001030" stroke-width="1.6" paint-order="stroke">U</text></svg>
<svg style="left:358px;top:53px" width="16" height="16" viewBox="0 0 16 16"><text x="8" y="14" text-anchor="middle" font-family="Liberation Mono" font-weight="700" font-size="16" fill="#40b4f4" stroke="#001030" stroke-width="1.6" paint-order="stroke">L</text></svg>
<svg style="left:380px;top:53px" width="16" height="16" viewBox="0 0 16 16"><text x="8" y="14" text-anchor="middle" font-family="Liberation Mono" font-weight="700" font-size="16" fill="#40b4f4" stroke="#001030" stroke-width="1.6" paint-order="stroke">F</text></svg>
<svg style="left:403px;top:53px" width="16" height="16" viewBox="0 0 16 16"><text x="8" y="14" text-anchor="middle" font-family="Liberation Mono" font-weight="700" font-size="16" fill="#40b4f4" stroke="#001030" stroke-width="1.6" paint-order="stroke">V</text></svg>
<svg style="left:425px;top:53px" width="16" height="16" viewBox="0 0 16 16"><text x="8" y="14" text-anchor="middle" font-family="Liberation Mono" font-weight="700" font-size="16" fill="#5aa0e0" stroke="#001030" stroke-width="1.6" paint-order="stroke">B</text></svg>
<svg style="left:447px;top:60px" width="6" height="4" viewBox="0 0 6 4"><path d="M0 0 H6 L3.0 4 Z" fill="#000"/></svg>
<div style="left:465px;top:52px;width:1px;height:19px;background:#c6c6c6;"></div>
<svg style="left:474px;top:53px" width="16" height="16" viewBox="0 0 16 16"><ellipse cx="7.5" cy="9" rx="4" ry="5.2" fill="#3060b0" transform="rotate(35 7.5 9)"/><circle cx="11" cy="4.5" r="2" fill="#3060b0"/><path d="M3 5 L6 7 M1 9 L5 9.5 M2 13 L5 11.5 M9 15 L8 12.5 M13 12 L10.5 10.5 M14 8 L11 8" stroke="#3060b0" stroke-width="1.2"/><path d="M12 1 L15 3 L12.5 4.5 Z" fill="#20a020"/></svg>
<svg style="left:497px;top:60px" width="6" height="4" viewBox="0 0 6 4"><path d="M0 0 H6 L3.0 4 Z" fill="#000"/></svg>
<svg style="left:509px;top:53px" width="16" height="16" viewBox="0 0 16 16"><rect x="1" y="0" width="8" height="9" rx="3" fill="#9a9a9a"/><rect x="0" y="7" width="9" height="9" rx="3" fill="#9a9a9a"/><rect x="8" y="7" width="8" height="9" rx="3" fill="#9a9a9a"/><circle cx="5" cy="4.5" r="1.2" fill="#bbb"/><circle cx="4.5" cy="11.5" r="1.2" fill="#bbb"/><circle cx="12" cy="11.5" r="1.2" fill="#bbb"/></svg>
<div style="left:534px;top:52px;width:1px;height:19px;background:#c6c6c6;"></div>
<svg style="left:543px;top:53px" width="16" height="16" viewBox="0 0 16 16"><circle cx="8" cy="8" r="7.2" fill="#fff" stroke="#333" stroke-width="1"/><circle cx="8" cy="8" r="4.8" fill="#ff2020"/></svg>
<svg style="left:567px;top:60px" width="6" height="4" viewBox="0 0 6 4"><path d="M0 0 H6 L3.0 4 Z" fill="#000"/></svg>
<svg style="left:580px;top:53px" width="16" height="16" viewBox="0 0 16 16"><path d="M4 2 L13 8 L4 14 Z" fill="#109010"/></svg>
<svg style="left:601px;top:53px" width="16" height="16" viewBox="0 0 16 16"><rect x="2" y="2" width="4.5" height="12" fill="#a0a0a0"/><rect x="9" y="2" width="4.5" height="12" fill="#a0a0a0"/></svg>
<svg style="left:623px;top:53px" width="16" height="16" viewBox="0 0 16 16"><rect x="3" y="3" width="10" height="10" fill="#a00000"/></svg>
<svg style="left:645px;top:53px" width="16" height="16" viewBox="0 0 16 16"><circle cx="11.5" cy="5" r="3" fill="#c00000"/><path d="M9.5 7 L4.5 12" stroke="#c00000" stroke-width="1.5"/><path d="M1 10.5 L4 12.5 L2.5 15.5 M4 12.5 L7.5 13.5" stroke="#e0b000" stroke-width="1.6" fill="none"/><path d="M13 2 L15 0.5" stroke="#c00000" stroke-width="1.3"/></svg>
<svg style="left:666px;top:53px" width="16" height="16" viewBox="0 0 16 16"><path d="M1.5 2.5 H9 V8" fill="none" stroke="#705000" stroke-width="3.4"/><path d="M1.5 2.5 H9 V8" fill="none" stroke="#e8b400" stroke-width="2"/><path d="M5.5 7.5 L9 11.5 L12.5 7.5 Z" fill="#e8b400" stroke="#705000" stroke-width="0.8"/><rect x="2" y="12.5" width="3" height="3" fill="#0860c0"/><rect x="12" y="12.5" width="3" height="3" fill="#0860c0"/></svg>
<svg style="left:689px;top:53px" width="16" height="16" viewBox="0 0 16 16"><path d="M2 10 V3 H11 V8" fill="none" stroke="#705000" stroke-width="3.4"/><path d="M2 10 V3 H11 V8" fill="none" stroke="#e8b400" stroke-width="2"/><path d="M7.5 7.5 L11 11.5 L14.5 7.5 Z" fill="#e8b400" stroke="#705000" stroke-width="0.8"/><rect x="6.5" y="12.5" width="3" height="3" fill="#0860c0"/></svg>
<svg style="left:711px;top:53px" width="16" height="16" viewBox="0 0 16 16"><path d="M6 13 V6 H10" fill="none" stroke="#705000" stroke-width="3.4"/><path d="M6 13 V6 H10" fill="none" stroke="#e8b400" stroke-width="2"/><path d="M10 2.5 L14 6 L10 9.5 Z" fill="#e8b400" stroke="#705000" stroke-width="0.8"/><rect x="1" y="12.5" width="3" height="3" fill="#0860c0"/><rect x="12" y="12.5" width="3" height="3" fill="#0860c0"/></svg>
<svg style="left:734px;top:53px" width="16" height="16" viewBox="0 0 16 16"><path d="M7 12 H2.5 V2.5 H13 V12 H10" fill="none" stroke="#705000" stroke-width="3.4"/><path d="M7 12 H2.5 V2.5 H13 V12 H10" fill="none" stroke="#e8b400" stroke-width="2"/><path d="M9.5 8.5 L5.5 12 L9.5 15.5 Z" fill="#e8b400" stroke="#705000" stroke-width="0.8"/></svg>
<svg style="left:756px;top:53px" width="16" height="16" viewBox="0 0 16 16"><path d="M7 12 H2.5 V2.5 H13 V12 H10" fill="none" stroke="#705000" stroke-width="3.4"/><path d="M7 12 H2.5 V2.5 H13 V12 H10" fill="none" stroke="#e8b400" stroke-width="2"/><path d="M9.5 8.5 L5.5 12 L9.5 15.5 Z" fill="#e8b400" stroke="#705000" stroke-width="0.8"/></svg>
<div style="left:780px;top:52px;width:1px;height:19px;background:#c6c6c6;"></div>
<svg style="left:789px;top:53px" width="16" height="16" viewBox="0 0 16 16"><path d="M6 3 H12 L15 6 V15.5 H6 Z" fill="#a8a8a8" stroke="#8a8a8a"/><path d="M1 8 L5 4 V6.5 H10 V10 H5 V12 Z" fill="#a0a0a0" stroke="#808080" stroke-width="0.8"/><path d="M2 3 L4 5 L8 0.5" stroke="#909090" stroke-width="1.3" fill="none"/></svg>
<svg style="left:811px;top:53px" width="16" height="16" viewBox="0 0 16 16"><path d="M6 3 H12 L15 6 V15.5 H6 Z" fill="#a8a8a8" stroke="#8a8a8a"/><path d="M1 8 L5 4 V6.5 H10 V10 H5 V12 Z" fill="#a0a0a0" stroke="#808080" stroke-width="0.8"/><path d="M2 3 L4 5 L8 0.5" stroke="#909090" stroke-width="1.3" fill="none"/></svg>
<div style="left:836px;top:52px;width:1px;height:19px;background:#c6c6c6;"></div>
<svg style="left:845px;top:53px" width="16" height="16" viewBox="0 0 16 16"><g ><path d="M4 7 C6 2, 14 3, 14 10 C14 13, 11 15, 10 15" fill="none" stroke="#a0a0a0" stroke-width="3.5"/><path d="M0.5 5 L6.5 3.5 L5.5 10 Z" fill="#a0a0a0"/></g></svg>
<svg style="left:870px;top:60px" width="6" height="4" viewBox="0 0 6 4"><path d="M0 0 H6 L3.0 4 Z" fill="#999"/></svg>
<svg style="left:881px;top:53px" width="16" height="16" viewBox="0 0 16 16"><g transform="translate(16 0) scale(-1 1)"><path d="M4 7 C6 2, 14 3, 14 10 C14 13, 11 15, 10 15" fill="none" stroke="#a0a0a0" stroke-width="3.5"/><path d="M0.5 5 L6.5 3.5 L5.5 10 Z" fill="#a0a0a0"/></g></svg>
<svg style="left:906px;top:60px" width="6" height="4" viewBox="0 0 6 4"><path d="M0 0 H6 L3.0 4 Z" fill="#999"/></svg>
<div style="left:920px;top:52px;width:1px;height:19px;background:#c6c6c6;"></div>
<svg style="left:929px;top:53px" width="16" height="16" viewBox="0 0 16 16"><path d="M2 9 L6 14 L15 2" fill="none" stroke="#8020e0" stroke-width="3" stroke-linejoin="round"/></svg>
<svg style="left:952px;top:53px" width="16" height="16" viewBox="0 0 16 16"><path d="M0.5 0.5 H12 L15.5 4 V15.5 H0.5 Z" fill="#fff" stroke="#000" stroke-width="1.2"/><text x="7.5" y="7.3" text-anchor="middle" font-family="Liberation Mono" font-weight="700" font-size="7.5" fill="#000">10</text><text x="7.5" y="13.8" text-anchor="middle" font-family="Liberation Mono" font-weight="700" font-size="7.5" fill="#000">01</text></svg>
<svg style="left:974px;top:53px" width="16" height="16" viewBox="0 0 16 16"><path d="M1 5 L5 1 L11 7 L13 4 L15 15 L4 13 L7 11 Z" fill="#30b030" stroke="#106010" stroke-width="1.1" stroke-linejoin="round"/></svg>
<svg style="left:995px;top:53px" width="16" height="16" viewBox="0 0 16 16"><rect x="0.5" y="2.5" width="15" height="12" fill="#d8d8d8" stroke="#555" stroke-width="1"/><path d="M2.2 3.5 V14" stroke="#000" stroke-width="1.4" stroke-dasharray="1.3 1.3"/><rect x="5" y="4" width="9" height="3" fill="#3050a0"/><rect x="5" y="8" width="9" height="2" fill="#5070c0"/><rect x="5" y="11" width="9" height="3" fill="#b0e0c0"/></svg>
<svg style="left:1017px;top:53px" width="16" height="16" viewBox="0 0 16 16"><path d="M0.5 3 H6 L7.5 1 H13 V4 H15.5 V15 H0.5 Z" fill="#e8c040" stroke="#806010" stroke-width="1"/><text x="8" y="13.5" text-anchor="middle" font-family="Liberation Sans" font-weight="700" font-size="8" fill="#111">DT</text></svg>
<svg style="left:1039px;top:53px" width="16" height="16" viewBox="0 0 16 16"><rect x="0.5" y="2.5" width="15" height="12" fill="#d8d8d8" stroke="#555" stroke-width="1"/><path d="M2.2 3.5 V14" stroke="#000" stroke-width="1.4" stroke-dasharray="1.3 1.3"/><rect x="5" y="4" width="9" height="3" fill="#3050a0"/><rect x="5" y="8" width="9" height="2" fill="#5070c0"/><rect x="5" y="11" width="9" height="3" fill="#b0e0c0"/></svg>
<svg style="left:1062px;top:53px" width="16" height="16" viewBox="0 0 16 16"><path d="M10.5 3.5 A5 5 0 1 0 10.5 11" fill="none" stroke="#2080f0" stroke-width="3"/><text x="12.5" y="15" text-anchor="middle" font-family="Liberation Serif" font-style="italic" font-weight="700" font-size="10" fill="#d020c0">f</text></svg>
<svg style="left:1083px;top:53px" width="16" height="16" viewBox="0 0 16 16"><rect x="6" y="0" width="4" height="4" fill="#70a8e8" stroke="#4080c0" stroke-width="0.6"/><path d="M8 4 V6 M2 10 V7 H14 V10 M8 6 V10" stroke="#555" stroke-width="1" fill="none"/><rect x="0.5" y="11" width="4" height="4" fill="#50c050"/><rect x="6" y="11" width="4" height="4" fill="#50c050"/><rect x="11.5" y="11" width="4" height="4" fill="#208020"/></svg>
<svg style="left:1105px;top:53px" width="16" height="16" viewBox="0 0 16 16"><circle cx="8" cy="8" r="7.5" fill="#10a030"/><path d="M6 4 L12 8 L6 12 Z" fill="#fff"/></svg>
<svg style="left:1127px;top:53px" width="16" height="16" viewBox="0 0 16 16"><rect x="0.8" y="0.8" width="13.5" height="12" fill="#10ee50" stroke="#000" stroke-width="1.6"/><rect x="2.2" y="2.5" width="3.5" height="6.5" fill="#333" stroke="#000" stroke-width="0.6"/><rect x="8.3" y="2.5" width="3.5" height="6.5" fill="#333" stroke="#000" stroke-width="0.6"/><path d="M6.3 3.5 H7.7 M6.3 5.5 H7.7 M6.3 7.5 H7.7 M1.5 3.5 H2 M12 3.5 H13 M1.5 5.5 H2 M12 5.5 H13" stroke="#fff" stroke-width="0.9"/><path d="M1.5 13 H14 L15 15.5 H2.5 Z" fill="#000"/><path d="M3.5 12 V13.5 M5.5 12 V13.5 M7.5 12 V13.5 M9.5 12 V13.5 M11.5 12 V13.5" stroke="#fff" stroke-width="0.9"/></svg>
<svg style="left:1149px;top:53px" width="16" height="16" viewBox="0 0 16 16"><path d="M8 0.8 L15.2 8 L8 15.2 L0.8 8 Z" fill="#ff8000" stroke="#1010a0" stroke-width="1.3"/></svg>
<svg style="left:1171px;top:53px" width="16" height="16" viewBox="0 0 16 16"><rect x="0.5" y="1.5" width="15" height="13" fill="#fff" stroke="#6090d0"/><path d="M2 3.5 H14" stroke="#40b040" stroke-width="1.2"/><path d="M2 6.5 H14 M2 9 H14 M2 11.5 H14 M5 5.5 V13" stroke="#90b0e0" stroke-width="1"/></svg>
<svg style="left:1194px;top:53px" width="16" height="16" viewBox="0 0 16 16"><rect x="0.5" y="1.5" width="15" height="13" fill="#fff" stroke="#6090d0"/><path d="M2 3.5 H14" stroke="#40b040" stroke-width="1.2"/><path d="M2 6.5 H14 M2 9 H14 M2 11.5 H14 M5 5.5 V13" stroke="#90b0e0" stroke-width="1"/></svg>
<svg style="left:1194px;top:53px" width="16" height="16" viewBox="0 0 16 16"><path d="M6 9 H10 V6.5 L15 10.5 L10 14.5 V12 H6 Z" fill="#60b040" stroke="#307020" stroke-width="0.8"/></svg>
<svg style="left:1215px;top:53px" width="16" height="16" viewBox="0 0 16 16"><path d="M6 0.5 H9 L10.5 2 V5 H6 Z" fill="#fafafa" stroke="#aaa"/><path d="M8 5 V7 M3 10 V7.5 H13 V10 M8 7 V10" stroke="#999" fill="none"/><rect x="0.5" y="10" width="4.5" height="5.5" fill="#fafafa" stroke="#aaa"/><rect x="5.8" y="10" width="4.5" height="5.5" fill="#fafafa" stroke="#aaa"/><rect x="11" y="10" width="4.5" height="5.5" fill="#fafafa" stroke="#aaa"/><rect x="2" y="12" width="1.5" height="2.5" fill="#60a0e0"/><rect x="7.3" y="12" width="1.5" height="2.5" fill="#f08040"/><rect x="12.5" y="12" width="1.5" height="2.5" fill="#60c060"/></svg>
<div style="left:1242px;top:52px;width:1px;height:19px;background:#c6c6c6;"></div>
<svg style="left:1250px;top:53px" width="16" height="16" viewBox="0 0 16 16"><circle cx="7" cy="6.5" r="6" fill="#a8a8a8"/><path d="M5.5 3.5 L10 6.5 L5.5 9.5 Z" fill="#c8c8c8"/><path d="M12 8 H14.5 V14 H7 M9 12.5 L7 14 L9 15.5" stroke="#a8a8a8" stroke-width="1.5" fill="none"/></svg>
<svg style="left:4px;top:82px" width="16" height="16" viewBox="0 0 16 16"><rect x="1" y="2" width="14" height="12" fill="#fff" stroke="#1a4ea0" stroke-width="2"/><path d="M4 6 L6.5 8 L4 10" stroke="#555" stroke-width="1" fill="none"/><rect x="1" y="2" width="14" height="2" fill="#1a4ea0"/></svg>
<svg style="left:436px;top:81px" width="17" height="17" viewBox="0 0 17 17"><path d="M7.5 1.2 H15.5 L9.5 12.5 H2.5 Z" fill="#f8d030"/><path d="M7.5 1.2 L2.5 12 M15.5 1.2 L9.5 12.5" stroke="#000" stroke-width="1.2" stroke-dasharray="1.2 0.9"/><path d="M6 5 H13 M4.5 8 H11.5" stroke="#fff4a0" stroke-width="1"/><circle cx="5.5" cy="12.3" r="3.4" fill="#f0b0b8" stroke="#804848" stroke-width="0.8"/><path d="M8 16 H14" stroke="#d8a8a8" stroke-width="0.9"/></svg>
<div style="left:457px;top:82px;width:1px;height:18px;background:#c6c6c6;"></div>
<svg style="left:462px;top:84px" width="12" height="12" viewBox="0 0 12 12"><path d="M1.5 1.5 L10.5 10.5 M10.5 1.5 L1.5 10.5" stroke="#000" stroke-width="2.4" stroke-linecap="butt"/></svg>
<svg style="left:460px;top:109px" width="16" height="16" viewBox="0 0 16 16"><path d="M4.5 1 H12 L15 4 V15 H4.5 Z" fill="#e2eefc" stroke="#3a78cc" stroke-width="1.1" stroke-linejoin="round"/><rect x="6" y="11" width="8" height="2" fill="#4ab0f4"/><path d="M4.5 5.5 L1.5 8.5 L4.5 11.5 M8 5.5 L11 8.5 L8 11.5" stroke="#3a8ce0" stroke-width="1.8" fill="none"/></svg>
<svg style="left:341px;top:139px" width="13" height="14" viewBox="0 0 13 14"><path d="M1 1 H12 L1 13 Z" fill="#eee" stroke="#777" stroke-width="1"/><path d="M2 3 H11 M2 6 H8 M2 9 H5" stroke="#aaa" stroke-width="1.2"/></svg>
<svg style="left:436px;top:139px" width="13" height="14" viewBox="0 0 13 14"><path d="M1 1 H12 L1 13 Z" fill="#eee" stroke="#777" stroke-width="1"/><path d="M2 3 H11 M2 6 H8 M2 9 H5" stroke="#aaa" stroke-width="1.2"/></svg>
<div style="left:357px;top:138.84px;font-size:12px;line-height:12px;color:#111;font-weight:700;font-family:'Liberation Sans', sans-serif;letter-spacing:0px;white-space:pre;transform:scaleX(1.2);transform-origin:0 0;">1</div>
<div style="left:453px;top:138.84px;font-size:12px;line-height:12px;color:#111;font-weight:700;font-family:'Liberation Sans', sans-serif;letter-spacing:0px;white-space:pre;transform:scaleX(1.2);transform-origin:0 0;">2</div>
<svg style="left:13px;top:386px" width="16" height="16" viewBox="0 0 16 16"><circle cx="8" cy="8" r="5.5" fill="none" stroke="#e0b000" stroke-width="2.4"/><circle cx="8.5" cy="7.5" r="3.2" fill="#108010"/><path d="M9 7 L15 1" stroke="#108010" stroke-width="2"/></svg>
<svg style="left:120px;top:390px" width="9" height="9" viewBox="0 0 9 9"><path d="M1.5 1.5 L7.5 7.5 M7.5 1.5 L1.5 7.5" stroke="#111" stroke-width="1.6"/></svg>
<svg style="left:155px;top:386px" width="16" height="16" viewBox="0 0 16 16"><rect x="1" y="2" width="14" height="12" fill="#fff" stroke="#1a4ea0" stroke-width="2"/><path d="M4 6 L6.5 8 L4 10" stroke="#555" stroke-width="1" fill="none"/><rect x="1" y="2" width="14" height="2" fill="#1a4ea0"/></svg>
<svg style="left:281px;top:390px" width="9" height="9" viewBox="0 0 9 9"><path d="M1.5 1.5 L7.5 7.5 M7.5 1.5 L1.5 7.5" stroke="#111" stroke-width="1.6"/></svg>
<svg style="left:6px;top:422px" width="16" height="16" viewBox="0 0 16 16"><rect x="6" y="0" width="4" height="4" fill="#70a8e8" stroke="#4080c0" stroke-width="0.6"/><path d="M8 4 V6 M2 10 V7 H14 V10 M8 6 V10" stroke="#555" stroke-width="1" fill="none"/><rect x="0.5" y="11" width="4" height="4" fill="#50c050"/><rect x="6" y="11" width="4" height="4" fill="#50c050"/><rect x="11.5" y="11" width="4" height="4" fill="#208020"/></svg>
<div style="left:333px;top:418px;width:21px;height:22px;background:#fafafa;border-left:1px solid #9a9a9a;border-top:1px solid #9a9a9a;"></div>
<svg style="left:336px;top:421px" width="16" height="16" viewBox="0 0 16 16"><rect x="6" y="0" width="4" height="4" fill="#70a8e8" stroke="#4080c0" stroke-width="0.6"/><path d="M8 4 V6 M2 10 V7 H14 V10 M8 6 V10" stroke="#555" stroke-width="1" fill="none"/><rect x="0.5" y="11" width="4" height="4" fill="#50c050"/><rect x="6" y="11" width="4" height="4" fill="#50c050"/><rect x="11.5" y="11" width="4" height="4" fill="#208020"/></svg>
<svg style="left:357px;top:421px" width="16" height="16" viewBox="0 0 16 16"><rect x="0.5" y="0.5" width="14" height="14" fill="#e8f0fa" stroke="#4a90d8"/><path d="M2 3 H13" stroke="#40b040"/><text x="7.5" y="12.5" text-anchor="middle" font-family="Liberation Sans" font-weight="700" font-size="11" fill="#000">E</text></svg>
<svg style="left:379px;top:421px" width="16" height="16" viewBox="0 0 16 16"><rect x="0.5" y="0.5" width="14" height="14" fill="#e8f0fa" stroke="#4a90d8"/><path d="M2 3 H13" stroke="#40b040"/><text x="7.5" y="12.5" text-anchor="middle" font-family="Liberation Sans" font-weight="700" font-size="11" fill="#000">A</text></svg>
<div style="left:404px;top:421px;width:1px;height:16px;background:#c6c6c6;"></div>
<svg style="left:413px;top:421px" width="16" height="16" viewBox="0 0 16 16"><rect x="0.8" y="5" width="14.4" height="10" rx="1.5" fill="#3a3e42" stroke="#000" stroke-width="1.2"/><path d="M5 5 V2 Q5 1 6 1 H10 Q11 1 11 2 V5" fill="#ddd" stroke="#000" stroke-width="1.2"/><circle cx="8" cy="10.5" r="3.3" fill="#111"/><circle cx="7.3" cy="9.8" r="1" fill="#eee"/><path d="M3 7 H13" stroke="#666" stroke-width="0.8"/></svg>
<div style="left:434px;top:421px;width:1px;height:16px;background:#c6c6c6;"></div>
<svg style="left:439px;top:427px" width="10" height="6" viewBox="0 0 10 6"><path d="M0 0 H10 L5.0 6 Z" fill="#000"/></svg>
<svg style="left:461px;top:423px" width="13" height="13" viewBox="0 0 13 13"><path d="M1.5 1.5 L11.5 11.5 M11.5 1.5 L1.5 11.5" stroke="#000" stroke-width="2.4" stroke-linecap="butt"/></svg>
<div style="left:3px;top:464px;width:1px;height:258px;background:#c8c8c8;"></div>
<svg style="left:7px;top:467px" width="16" height="16" viewBox="0 0 16 16"><ellipse cx="7.5" cy="9" rx="4" ry="5.2" fill="#3060b0" transform="rotate(35 7.5 9)"/><circle cx="11" cy="4.5" r="2" fill="#3060b0"/><path d="M3 5 L6 7 M1 9 L5 9.5 M2 13 L5 11.5 M9 15 L8 12.5 M13 12 L10.5 10.5 M14 8 L11 8" stroke="#3060b0" stroke-width="1.2"/><path d="M12 1 L15 3 L12.5 4.5 Z" fill="#20a020"/></svg>
<svg style="left:10px;top:489px" width="7" height="10" viewBox="0 0 7 10"><path d="M1 1 L5.5 5 L1 9" stroke="#a8a8a8" stroke-width="1.1" fill="none"/></svg>
<svg style="left:28px;top:489px" width="10" height="10" viewBox="0 0 10 10"><circle cx="5" cy="5" r="4.2" fill="#b00000"/></svg>
<svg style="left:10px;top:508px" width="7" height="10" viewBox="0 0 7 10"><path d="M1 1 L5.5 5 L1 9" stroke="#a8a8a8" stroke-width="1.1" fill="none"/></svg>
<svg style="left:26px;top:506px" width="16" height="16" viewBox="0 0 16 16"><circle cx="7.5" cy="7.5" r="7" fill="#0a64b0"/><path d="M3.81 4.41 A4.8 4.8 0 0 1 11.19 10.59 Z" fill="#fff"/></svg>
<svg style="left:8px;top:529px" width="10" height="7" viewBox="0 0 10 7"><path d="M1 1 L5 5.5 L9 1" stroke="#a8a8a8" stroke-width="1.1" fill="none"/></svg>
<svg style="left:28px;top:527px" width="10" height="10" viewBox="0 0 10 10"><circle cx="5" cy="5" r="4.2" fill="#b00000"/></svg>
<svg style="left:26px;top:548px" width="10" height="7" viewBox="0 0 10 7"><path d="M1 1 L5 5.5 L9 1" stroke="#a8a8a8" stroke-width="1.1" fill="none"/></svg>
<svg style="left:44px;top:546px" width="16" height="10" viewBox="0 0 16 10"><path d="M1 3 H8.5 V0.8 L14.5 5 L8.5 9.2 V7 H1 Z" fill="#fff" stroke="#555" stroke-width="1.6" stroke-linejoin="miter"/></svg>
<svg style="left:46px;top:565px" width="7" height="10" viewBox="0 0 7 10"><path d="M1 1 L5.5 5 L1 9" stroke="#a8a8a8" stroke-width="1.1" fill="none"/></svg>
<svg style="left:62px;top:563px" width="16" height="16" viewBox="0 0 16 16"><circle cx="7.5" cy="7.5" r="7" fill="#0a64b0"/><path d="M3.81 4.41 A4.8 4.8 0 0 1 11.19 10.59 Z" fill="#fff"/></svg>
<svg style="left:46px;top:584px" width="7" height="10" viewBox="0 0 7 10"><path d="M1 1 L5.5 5 L1 9" stroke="#a8a8a8" stroke-width="1.1" fill="none"/></svg>
<svg style="left:62px;top:581px" width="16" height="16" viewBox="0 0 16 16"><rect x="0.8" y="0.8" width="13.5" height="12" fill="#10ee50" stroke="#000" stroke-width="1.6"/><rect x="2.2" y="2.5" width="3.5" height="6.5" fill="#333" stroke="#000" stroke-width="0.6"/><rect x="8.3" y="2.5" width="3.5" height="6.5" fill="#333" stroke="#000" stroke-width="0.6"/><path d="M6.3 3.5 H7.7 M6.3 5.5 H7.7 M6.3 7.5 H7.7 M1.5 3.5 H2 M12 3.5 H13 M1.5 5.5 H2 M12 5.5 H13" stroke="#fff" stroke-width="0.9"/><path d="M1.5 13 H14 L15 15.5 H2.5 Z" fill="#000"/><path d="M3.5 12 V13.5 M5.5 12 V13.5 M7.5 12 V13.5 M9.5 12 V13.5 M11.5 12 V13.5" stroke="#fff" stroke-width="0.9"/></svg>
<svg style="left:46px;top:603px" width="7" height="10" viewBox="0 0 7 10"><path d="M1 1 L5.5 5 L1 9" stroke="#a8a8a8" stroke-width="1.1" fill="none"/></svg>
<svg style="left:62px;top:600px" width="16" height="16" viewBox="0 0 16 16"><circle cx="3.5" cy="3.5" r="2.6" fill="none" stroke="#777" stroke-width="1.4"/><rect x="9" y="0.5" width="6" height="6" fill="#777"/><rect x="1" y="9.5" width="5" height="5" fill="none" stroke="#777" stroke-width="1.5"/><circle cx="12" cy="12" r="3" fill="#777"/><path d="M6 3.5 H9 M12 6.5 V9" stroke="#777" stroke-width="1.3"/></svg>
<svg style="left:44px;top:624px" width="10" height="7" viewBox="0 0 10 7"><path d="M1 1 L5 5.5 L9 1" stroke="#a8a8a8" stroke-width="1.1" fill="none"/></svg>
<svg style="left:64px;top:622px" width="10" height="10" viewBox="0 0 10 10"><circle cx="5" cy="5" r="4.2" fill="#b00000"/></svg>
<svg style="left:62px;top:643px" width="10" height="7" viewBox="0 0 10 7"><path d="M1 1 L5 5.5 L9 1" stroke="#a8a8a8" stroke-width="1.1" fill="none"/></svg>
<svg style="left:80px;top:641px" width="16" height="10" viewBox="0 0 16 10"><path d="M1 3 H8.5 V0.8 L14.5 5 L8.5 9.2 V7 H1 Z" fill="#fff" stroke="#555" stroke-width="1.6" stroke-linejoin="miter"/></svg>
<svg style="left:80px;top:662px" width="10" height="7" viewBox="0 0 10 7"><path d="M1 1 L5 5.5 L9 1" stroke="#a8a8a8" stroke-width="1.1" fill="none"/></svg>
<svg style="left:98px;top:658px" width="15" height="13" viewBox="0 0 15 13"><path d="M0 1 H14" stroke="#209020" stroke-width="1.6"/><path d="M0 6.5 H14 M0 11.5 H14" stroke="#555" stroke-width="1.6"/></svg>
<svg style="left:100px;top:679px" width="7" height="10" viewBox="0 0 7 10"><path d="M1 1 L5.5 5 L1 9" stroke="#c0c8d8" stroke-width="1.1" fill="none"/></svg>
<svg style="left:118px;top:679px" width="10" height="10" viewBox="0 0 10 10"><circle cx="5" cy="5" r="4.4" fill="#b00000"/></svg>
<svg style="left:100px;top:698px" width="10" height="10" viewBox="0 0 10 10"><circle cx="5" cy="5" r="3.2" fill="none" stroke="#b00000" stroke-width="2"/></svg>
<div style="left:479px;top:464px;width:2px;height:258px;background:#ffffff;"></div>
<div style="left:481px;top:410px;width:6px;height:360px;background:#f0f0f0;"></div>
<svg style="left:457px;top:741px" width="16" height="16" viewBox="0 0 16 16"><path d="M4.5 1 H12 L15 4 V15 H4.5 Z" fill="#e2eefc" stroke="#3a78cc" stroke-width="1.1" stroke-linejoin="round"/><rect x="6" y="11" width="8" height="2" fill="#4ab0f4"/><path d="M4.5 5.5 L1.5 8.5 L4.5 11.5 M8 5.5 L11 8.5 L8 11.5" stroke="#3a8ce0" stroke-width="1.8" fill="none"/></svg>
<svg style="left:491px;top:86px" width="14" height="12" viewBox="0 0 14 12"><rect x="0.5" y="0.5" width="12.5" height="11" fill="#e8f4ec" stroke="#777" stroke-width="0.6"/><rect x="1" y="1" width="3" height="10" fill="#fff"/><path d="M2.3 1.8 V11" stroke="#000" stroke-width="1.3" stroke-dasharray="1.2 0.8"/><rect x="5" y="1.5" width="7" height="3" fill="#2a4070"/><rect x="5" y="5" width="7" height="1.2" fill="#c8d8f8"/><rect x="5" y="6.5" width="3" height="1.2" fill="#203060"/><rect x="9" y="6.5" width="3" height="1.2" fill="#203060"/><rect x="5" y="8" width="7" height="3" fill="#b8e8c8"/><path d="M13 0.5 V11.5" stroke="#222" stroke-width="1.2"/></svg>
<svg style="left:955px;top:84px" width="16" height="16" viewBox="0 0 16 16"><path d="M0.5 0.5 H7 L9 2.5 V10 H0.5 Z" fill="#c8c8c8"/><path d="M6 5 H13 L15.5 7.5 V15.5 H6 Z" fill="#b0b0b0"/></svg>
<svg style="left:976px;top:84px" width="16" height="16" viewBox="0 0 16 16"><path d="M1 3 Q1 0.5 5 0.5 H10 Q14 0.5 14 3 V15.5 H1 Z" fill="#a8a8a8"/><path d="M4 4 Q4 2.5 7 2.5 H12 Q16 2.5 16 5 V15.5 H4 Z" fill="#b4b4b4"/></svg>
<div style="left:1002px;top:83px;width:1px;height:17px;background:#c6c6c6;"></div>
<svg style="left:1011px;top:84px" width="16" height="16" viewBox="0 0 16 16"><path d="M2 7 A6 6 0 0 1 13 5" fill="none" stroke="#4a90e0" stroke-width="2.6"/><path d="M14 9 A6 6 0 0 1 3 11" fill="none" stroke="#4a90e0" stroke-width="2.6"/><path d="M10 2 L15 5.5 L10 7 Z M6 14 L1 10.5 L6 9 Z" fill="#4a90e0"/></svg>
<div style="left:1036px;top:83px;width:1px;height:17px;background:#c6c6c6;"></div>
<div style="left:1043px;top:82px;width:21px;height:21px;background:#fafafa;border-left:1px solid #9a9a9a;border-top:1px solid #9a9a9a;"></div>
<svg style="left:1045px;top:84px" width="16" height="16" viewBox="0 0 16 16"><path d="M1 0.5 L1 12 L4 9 L6.5 14 L8.5 13 L6 8 H10 Z" fill="#fff" stroke="#000" stroke-width="1"/><rect x="8" y="10" width="8" height="5" fill="#f0d040"/></svg>
<div style="left:1071px;top:83px;width:1px;height:17px;background:#c6c6c6;"></div>
<svg style="left:1078px;top:84px" width="16" height="16" viewBox="0 0 16 16"><rect x="0.5" y="0.5" width="15" height="9" fill="#fff" stroke="#444"/><path d="M1 3.5 H15 M1 6.5 H15" stroke="#444"/><rect x="6" y="4" width="5" height="2" fill="#f0a020"/><path d="M8 10 V15 M5.5 12.5 L8 15 L10.5 12.5" stroke="#222" stroke-width="1.4" fill="none"/></svg>
<svg style="left:1100px;top:84px" width="16" height="16" viewBox="0 0 16 16"><path d="M1 1 V15 M4 1 V15 M12 1 V15 M15 1 V15" stroke="#70a0e0" stroke-width="1" stroke-dasharray="2 1"/><path d="M3 12 L8 7 L10 9 L14 4" stroke="#30a030" stroke-width="2" fill="none"/></svg>
<div style="left:1126px;top:83px;width:1px;height:17px;background:#c6c6c6;"></div>
<svg style="left:1135px;top:84px" width="16" height="16" viewBox="0 0 16 16"><rect x="0.8" y="5" width="14.4" height="10" rx="1.5" fill="#3a3e42" stroke="#000" stroke-width="1.2"/><path d="M5 5 V2 Q5 1 6 1 H10 Q11 1 11 2 V5" fill="#ddd" stroke="#000" stroke-width="1.2"/><circle cx="8" cy="10.5" r="3.3" fill="#111"/><circle cx="7.3" cy="9.8" r="1" fill="#eee"/><path d="M3 7 H13" stroke="#666" stroke-width="0.8"/></svg>
<div style="left:1161px;top:83px;width:1px;height:17px;background:#c6c6c6;"></div>
<svg style="left:1168px;top:85px" width="16" height="14" viewBox="0 0 16 14"><path d="M1 5 H9 V1.5 L15 7 L9 12.5 V9 H1 Z" fill="#fff" stroke="#444" stroke-width="2"/></svg>
<svg style="left:1193px;top:90px" width="6" height="4" viewBox="0 0 6 4"><path d="M0 0 H6 L3.0 4 Z" fill="#000"/></svg>
<svg style="left:1205px;top:84px" width="16" height="16" viewBox="0 0 16 16"><path d="M2 1 L14 8 L2 15 L5 8 Z" fill="none" stroke="#333" stroke-width="2"/></svg>
<svg style="left:1228px;top:90px" width="6" height="4" viewBox="0 0 6 4"><path d="M0 0 H6 L3.0 4 Z" fill="#000"/></svg>
<div style="left:1239px;top:83px;width:1px;height:17px;background:#c6c6c6;"></div>
<svg style="left:1245px;top:88px" width="11" height="7" viewBox="0 0 11 7"><path d="M0 0 H11 L5.5 7 Z" fill="#000"/></svg>
<svg style="left:1264px;top:85px" width="13" height="13" viewBox="0 0 13 13"><path d="M1.5 1.5 L11.5 11.5 M11.5 1.5 L1.5 11.5" stroke="#000" stroke-width="2.4" stroke-linecap="butt"/></svg>
<svg style="left:495px;top:109px" width="14" height="14" viewBox="0 0 14 14"><circle cx="7" cy="7" r="6.5" fill="#fff"/><circle cx="7" cy="7" r="5" fill="#f01818"/></svg>
<svg style="left:594px;top:110px" width="11" height="11" viewBox="0 0 11 11"><path d="M1.5 1.5 L9.5 9.5 M9.5 1.5 L1.5 9.5" stroke="#fff" stroke-width="2.2" stroke-linecap="butt"/></svg>
<svg style="left:491px;top:415px" width="14" height="12" viewBox="0 0 14 12"><rect x="0.5" y="0.5" width="12.5" height="11" fill="#e8f4ec" stroke="#777" stroke-width="0.6"/><rect x="1" y="1" width="3" height="10" fill="#fff"/><path d="M2.3 1.8 V11" stroke="#000" stroke-width="1.3" stroke-dasharray="1.2 0.8"/><rect x="5" y="1.5" width="7" height="3" fill="#2a4070"/><rect x="5" y="5" width="7" height="1.2" fill="#c8d8f8"/><rect x="5" y="6.5" width="3" height="1.2" fill="#203060"/><rect x="9" y="6.5" width="3" height="1.2" fill="#203060"/><rect x="5" y="8" width="7" height="3" fill="#b8e8c8"/><path d="M13 0.5 V11.5" stroke="#222" stroke-width="1.2"/></svg>
<svg style="left:1047px;top:413px" width="16" height="16" viewBox="0 0 16 16"><path d="M0.5 0.5 H7 L9 2.5 V10 H0.5 Z" fill="#fafafa" stroke="#c0c0c0"/><path d="M5.5 5.5 H12 L15.5 9 V15.5 H5.5 Z" fill="#fafafa" stroke="#c0c0c0"/></svg>
<svg style="left:1069px;top:413px" width="16" height="16" viewBox="0 0 16 16"><path d="M1 3 Q1 0.5 5 0.5 H10 Q14 0.5 14 3 V15.5 H1 Z" fill="#a8a8a8"/><path d="M4 4 Q4 2.5 7 2.5 H12 Q16 2.5 16 5 V15.5 H4 Z" fill="#b4b4b4"/></svg>
<div style="left:1094px;top:412px;width:1px;height:17px;background:#c6c6c6;"></div>
<div style="left:1100px;top:411px;width:21px;height:21px;background:#fafafa;border-left:1px solid #9a9a9a;border-top:1px solid #9a9a9a;"></div>
<svg style="left:1102px;top:413px" width="16" height="16" viewBox="0 0 16 16"><path d="M1 0.5 L1 12 L4 9 L6.5 14 L8.5 13 L6 8 H10 Z" fill="#fff" stroke="#000" stroke-width="1"/><rect x="8" y="10" width="8" height="5" fill="#f0d040"/></svg>
<div style="left:1128px;top:412px;width:1px;height:17px;background:#c6c6c6;"></div>
<svg style="left:1136px;top:413px" width="16" height="16" viewBox="0 0 16 16"><rect x="0.5" y="0.5" width="15" height="9" fill="#fff" stroke="#444"/><path d="M1 3.5 H15 M1 6.5 H15" stroke="#444"/><rect x="6" y="4" width="5" height="2" fill="#f0a020"/><path d="M8 10 V15 M5.5 12.5 L8 15 L10.5 12.5" stroke="#222" stroke-width="1.4" fill="none"/></svg>
<svg style="left:1158px;top:413px" width="16" height="16" viewBox="0 0 16 16"><path d="M1 1 V15 M4 1 V15 M12 1 V15 M15 1 V15" stroke="#70a0e0" stroke-width="1" stroke-dasharray="2 1"/><path d="M3 12 L8 7 L10 9 L14 4" stroke="#30a030" stroke-width="2" fill="none"/></svg>
<div style="left:1184px;top:412px;width:1px;height:17px;background:#c6c6c6;"></div>
<svg style="left:1193px;top:413px" width="16" height="16" viewBox="0 0 16 16"><rect x="0.8" y="5" width="14.4" height="10" rx="1.5" fill="#3a3e42" stroke="#000" stroke-width="1.2"/><path d="M5 5 V2 Q5 1 6 1 H10 Q11 1 11 2 V5" fill="#ddd" stroke="#000" stroke-width="1.2"/><circle cx="8" cy="10.5" r="3.3" fill="#111"/><circle cx="7.3" cy="9.8" r="1" fill="#eee"/><path d="M3 7 H13" stroke="#666" stroke-width="0.8"/></svg>
<div style="left:1219px;top:412px;width:1px;height:17px;background:#c6c6c6;"></div>
<svg style="left:1227px;top:413px" width="16" height="16" viewBox="0 0 16 16"><rect x="0.5" y="1.5" width="12" height="13" fill="#fff" stroke="#888"/><rect x="2.5" y="6" width="7" height="3" fill="#5080d0"/><rect x="11" y="0.5" width="4.5" height="15" fill="#f0c040" stroke="#a07010" stroke-width="0.8"/></svg>
<svg style="left:1249px;top:420px" width="6" height="4" viewBox="0 0 6 4"><path d="M0 0 H6 L3.0 4 Z" fill="#000"/></svg>
<div style="left:1260px;top:412px;width:1px;height:17px;background:#c6c6c6;"></div>
<svg style="left:1265px;top:414px" width="13" height="13" viewBox="0 0 13 13"><path d="M1.5 1.5 L11.5 11.5 M11.5 1.5 L1.5 11.5" stroke="#000" stroke-width="2.4" stroke-linecap="butt"/></svg>
<div style="left:574px;top:594px;width:2px;height:2px;background:#a0a0a0;"></div>
<div style="left:574px;top:598px;width:2px;height:2px;background:#a0a0a0;"></div>
<div style="left:574px;top:602px;width:2px;height:2px;background:#a0a0a0;"></div>
<svg style="left:1295px;top:82px" width="16" height="16" viewBox="0 0 16 16"><circle cx="7.5" cy="7.5" r="7" fill="#0a64b0"/><path d="M3.81 4.41 A4.8 4.8 0 0 1 11.19 10.59 Z" fill="#fff"/></svg>
<svg style="left:1675px;top:82px" width="16" height="16" viewBox="0 0 16 16"><circle cx="8" cy="8.5" r="7" fill="#9a9a9a"/></svg>
<svg style="left:1697px;top:82px" width="16" height="16" viewBox="0 0 16 16"><circle cx="8" cy="8.5" r="7" fill="#9a9a9a"/><path d="M12 1 L15 1 M12 3 L15 3" stroke="#aaa" stroke-width="1"/></svg>
<svg style="left:1719px;top:82px" width="16" height="16" viewBox="0 0 16 16"><circle cx="8" cy="8.5" r="6.3" fill="#b0b0b0" stroke="#9a9a9a" stroke-width="1.5"/></svg>
<svg style="left:1741px;top:82px" width="16" height="16" viewBox="0 0 16 16"><circle cx="8" cy="8.5" r="6.3" fill="#b0b0b0" stroke="#9a9a9a" stroke-width="1.5"/><path d="M12 1 L15 1 M12 3 L15 3" stroke="#aaa" stroke-width="1"/></svg>
<svg style="left:1763px;top:82px" width="16" height="16" viewBox="0 0 16 16"><circle cx="5" cy="6" r="4" fill="#9a9a9a"/><circle cx="11" cy="11.5" r="4" fill="#9a9a9a"/></svg>
<div style="left:1790px;top:83px;width:1px;height:17px;background:#c6c6c6;"></div>
<svg style="left:1797px;top:82px" width="16" height="16" viewBox="0 0 16 16"><circle cx="8" cy="8.5" r="7" fill="#a8a8a8"/><path d="M5 5.5 L11 11.5 M11 5.5 L5 11.5" stroke="#d8d8d8" stroke-width="2"/></svg>
<svg style="left:1819px;top:82px" width="16" height="16" viewBox="0 0 16 16"><circle cx="8" cy="8.5" r="7" fill="#a8a8a8"/><path d="M5 5.5 L11 11.5 M11 5.5 L5 11.5" stroke="#d8d8d8" stroke-width="2"/></svg>
<div style="left:1845px;top:83px;width:1px;height:17px;background:#c6c6c6;"></div>
<svg style="left:1852px;top:82px" width="16" height="16" viewBox="0 0 16 16"><circle cx="7.5" cy="8" r="6" fill="#f4f4f4" stroke="#555" stroke-width="1.2"/><path d="M12 12 L15.5 15.5" stroke="#555" stroke-width="1.6"/><path d="M5 5 H6.5 M8.5 5 H10 M5 11 H6.5 M8.5 11 H10 M5 5 V6.5 M10 5 V6.5 M5 9.5 V11 M10 9.5 V11" stroke="#555" stroke-width="1"/></svg>
<svg style="left:1873px;top:82px" width="16" height="16" viewBox="0 0 16 16"><path d="M1 4 H15 M1 9 H15 M1 14 H15" stroke="#555" stroke-width="1.6"/><rect x="9" y="2" width="3" height="4" fill="#555"/><rect x="3" y="7" width="3" height="4" fill="#555"/><rect x="9" y="12" width="3" height="4" fill="#555"/></svg>
<div style="left:1894px;top:83px;width:1px;height:17px;background:#c6c6c6;"></div>
<svg style="left:1899px;top:84px" width="13" height="13" viewBox="0 0 13 13"><path d="M1.5 1.5 L11.5 11.5 M11.5 1.5 L1.5 11.5" stroke="#000" stroke-width="2.4" stroke-linecap="butt"/></svg>
<svg style="left:1395px;top:107px" width="13" height="14" viewBox="0 0 13 14"><path d="M1 1 V13 H12 Z" fill="#eee" stroke="#777" stroke-width="1"/><path d="M2 5 H5 M2 8 H8 M2 11 H11" stroke="#aaa" stroke-width="1.2"/></svg>
<svg style="left:1515px;top:107px" width="13" height="14" viewBox="0 0 13 14"><path d="M1 1 V13 H12 Z" fill="#eee" stroke="#777" stroke-width="1"/><path d="M2 5 H5 M2 8 H8 M2 11 H11" stroke="#aaa" stroke-width="1.2"/></svg>
<svg style="left:1609px;top:107px" width="13" height="14" viewBox="0 0 13 14"><path d="M1 1 V13 H12 Z" fill="#eee" stroke="#777" stroke-width="1"/><path d="M2 5 H5 M2 8 H8 M2 11 H11" stroke="#aaa" stroke-width="1.2"/></svg>
<svg style="left:1416px;top:425px" width="13" height="14" viewBox="0 0 13 14"><path d="M1 1 V13 H12 Z" fill="#eee" stroke="#777" stroke-width="1"/><path d="M2 5 H5 M2 8 H8 M2 11 H11" stroke="#aaa" stroke-width="1.2"/></svg>
<svg style="left:1558px;top:425px" width="13" height="14" viewBox="0 0 13 14"><path d="M1 1 V13 H12 Z" fill="#eee" stroke="#777" stroke-width="1"/><path d="M2 5 H5 M2 8 H8 M2 11 H11" stroke="#aaa" stroke-width="1.2"/></svg>
<svg style="left:1898px;top:391px" width="16" height="16" viewBox="0 0 16 16"><path d="M4.5 1 H12 L15 4 V15 H4.5 Z" fill="#e2eefc" stroke="#3a78cc" stroke-width="1.1" stroke-linejoin="round"/><rect x="6" y="11" width="8" height="2" fill="#4ab0f4"/><path d="M4.5 5.5 L1.5 8.5 L4.5 11.5 M8 5.5 L11 8.5 L8 11.5" stroke="#3a8ce0" stroke-width="1.8" fill="none"/></svg>
<svg style="left:1898px;top:710px" width="16" height="16" viewBox="0 0 16 16"><path d="M4.5 1 H12 L15 4 V15 H4.5 Z" fill="#e2eefc" stroke="#3a78cc" stroke-width="1.1" stroke-linejoin="round"/><rect x="6" y="11" width="8" height="2" fill="#4ab0f4"/><path d="M4.5 5.5 L1.5 8.5 L4.5 11.5 M8 5.5 L11 8.5 L8 11.5" stroke="#3a8ce0" stroke-width="1.8" fill="none"/></svg>
<svg style="left:1295px;top:743px" width="9" height="15" viewBox="0 0 9 15"><path d="M7.5 1 L1.5 7.5 L7.5 14" stroke="#333" stroke-width="1.3" fill="none"/></svg>
<svg style="left:1375px;top:746px" width="9" height="9" viewBox="0 0 9 9"><path d="M1.5 1.5 L7.5 7.5 M7.5 1.5 L1.5 7.5" stroke="#111" stroke-width="1.6"/></svg>
<svg style="left:1412px;top:742px" width="16" height="16" viewBox="0 0 16 16"><circle cx="3.5" cy="3.5" r="2.6" fill="none" stroke="#777" stroke-width="1.4"/><rect x="9" y="0.5" width="6" height="6" fill="#777"/><rect x="1" y="9.5" width="5" height="5" fill="none" stroke="#777" stroke-width="1.5"/><circle cx="12" cy="12" r="3" fill="#777"/><path d="M6 3.5 H9 M12 6.5 V9" stroke="#777" stroke-width="1.3"/></svg>
<svg style="left:1492px;top:746px" width="9" height="9" viewBox="0 0 9 9"><path d="M1.5 1.5 L7.5 7.5 M7.5 1.5 L1.5 7.5" stroke="#111" stroke-width="1.6"/></svg>
<svg style="left:1528px;top:742px" width="16" height="16" viewBox="0 0 16 16"><rect x="1" y="2" width="14" height="5" fill="none" stroke="#666" stroke-width="1.3"/><rect x="5" y="7" width="10" height="4" fill="none" stroke="#666" stroke-width="1.3"/><rect x="5" y="11" width="10" height="4" fill="none" stroke="#666" stroke-width="1.3"/></svg>
<svg style="left:1615px;top:746px" width="9" height="9" viewBox="0 0 9 9"><path d="M1.5 1.5 L7.5 7.5 M7.5 1.5 L1.5 7.5" stroke="#111" stroke-width="1.6"/></svg>
<svg style="left:1652px;top:742px" width="16" height="16" viewBox="0 0 16 16"><path d="M0.5 0.5 H12 L15.5 4 V15.5 H0.5 Z" fill="#fff" stroke="#000" stroke-width="1.2"/><text x="7.5" y="7.3" text-anchor="middle" font-family="Liberation Mono" font-weight="700" font-size="7.5" fill="#000">10</text><text x="7.5" y="13.8" text-anchor="middle" font-family="Liberation Mono" font-weight="700" font-size="7.5" fill="#000">01</text></svg>
<svg style="left:1731px;top:746px" width="9" height="9" viewBox="0 0 9 9"><path d="M1.5 1.5 L7.5 7.5 M7.5 1.5 L1.5 7.5" stroke="#111" stroke-width="1.6"/></svg>
<svg style="left:1768px;top:743px" width="16" height="16" viewBox="0 0 16 16"><circle cx="7.5" cy="7.5" r="7" fill="#0a64b0"/><path d="M3.81 4.41 A4.8 4.8 0 0 1 11.19 10.59 Z" fill="#fff"/></svg>
<svg style="left:1871px;top:746px" width="9" height="9" viewBox="0 0 9 9"><path d="M1.5 1.5 L7.5 7.5 M7.5 1.5 L1.5 7.5" stroke="#111" stroke-width="1.6"/></svg>
<svg style="left:1900px;top:745px" width="14" height="9" viewBox="0 0 14 9"><path d="M1 8 L7 2 L13 8" stroke="#333" stroke-width="1.4" fill="none"/></svg>
<svg style="left:6px;top:777px" width="15" height="13" viewBox="0 0 15 13"><path d="M0 1 H14" stroke="#209020" stroke-width="1.6"/><path d="M0 6.5 H14 M0 11.5 H14" stroke="#555" stroke-width="1.6"/></svg>
<svg style="left:646px;top:778px" width="13" height="13" viewBox="0 0 13 13"><path d="M1.5 1.5 L11.5 11.5 M11.5 1.5 L1.5 11.5" stroke="#000" stroke-width="2.4" stroke-linecap="butt"/></svg>
<svg style="left:8px;top:801px" width="13" height="14" viewBox="0 0 13 14"><path d="M1 1 V13 H12 Z" fill="#eee" stroke="#777" stroke-width="1"/><path d="M2 5 H5 M2 8 H8 M2 11 H11" stroke="#aaa" stroke-width="1.2"/></svg>
<svg style="left:603px;top:992px" width="16" height="16" viewBox="0 0 16 16"><path d="M4.5 1 H12 L15 4 V15 H4.5 Z" fill="#e2eefc" stroke="#3a78cc" stroke-width="1.1" stroke-linejoin="round"/><rect x="6" y="11" width="8" height="2" fill="#4ab0f4"/><path d="M4.5 5.5 L1.5 8.5 L4.5 11.5 M8 5.5 L11 8.5 L8 11.5" stroke="#3a8ce0" stroke-width="1.8" fill="none"/></svg>
<svg style="left:628px;top:992px" width="16" height="16" viewBox="0 0 16 16"><path d="M1 4 H15 M1 9 H15 M1 14 H15" stroke="#555" stroke-width="1.6"/><rect x="9" y="2" width="3" height="4" fill="#555"/><rect x="3" y="7" width="3" height="4" fill="#555"/><rect x="9" y="12" width="3" height="4" fill="#555"/></svg>
<svg style="left:652px;top:999px" width="6" height="4" viewBox="0 0 6 4"><path d="M0 0 H6 L3.0 4 Z" fill="#000"/></svg>
<svg style="left:13px;top:1024px" width="16" height="16" viewBox="0 0 16 16"><rect x="0.8" y="0.8" width="13.5" height="12" fill="#10ee50" stroke="#000" stroke-width="1.6"/><rect x="2.2" y="2.5" width="3.5" height="6.5" fill="#333" stroke="#000" stroke-width="0.6"/><rect x="8.3" y="2.5" width="3.5" height="6.5" fill="#333" stroke="#000" stroke-width="0.6"/><path d="M6.3 3.5 H7.7 M6.3 5.5 H7.7 M6.3 7.5 H7.7 M1.5 3.5 H2 M12 3.5 H13 M1.5 5.5 H2 M12 5.5 H13" stroke="#fff" stroke-width="0.9"/><path d="M1.5 13 H14 L15 15.5 H2.5 Z" fill="#000"/><path d="M3.5 12 V13.5 M5.5 12 V13.5 M7.5 12 V13.5 M9.5 12 V13.5 M11.5 12 V13.5" stroke="#fff" stroke-width="0.9"/></svg>
<svg style="left:91px;top:1028px" width="9" height="9" viewBox="0 0 9 9"><path d="M1.5 1.5 L7.5 7.5 M7.5 1.5 L1.5 7.5" stroke="#111" stroke-width="1.6"/></svg>
<svg style="left:127px;top:1026px" width="15" height="13" viewBox="0 0 15 13"><path d="M0 1 H14" stroke="#209020" stroke-width="1.6"/><path d="M0 6.5 H14 M0 11.5 H14" stroke="#555" stroke-width="1.6"/></svg>
<svg style="left:191px;top:1028px" width="9" height="9" viewBox="0 0 9 9"><path d="M1.5 1.5 L7.5 7.5 M7.5 1.5 L1.5 7.5" stroke="#111" stroke-width="1.6"/></svg>
<svg style="left:228px;top:1024px" width="16" height="16" viewBox="0 0 16 16"><rect x="1" y="1" width="14" height="10" fill="#c0d8f0" stroke="#666"/><rect x="3" y="3" width="10" height="6" fill="#5090d0"/><path d="M5 13 H11 M8 11 V13" stroke="#666" stroke-width="1.5"/></svg>
<svg style="left:306px;top:1028px" width="9" height="9" viewBox="0 0 9 9"><path d="M1.5 1.5 L7.5 7.5 M7.5 1.5 L1.5 7.5" stroke="#111" stroke-width="1.6"/></svg>
<svg style="left:341px;top:1024px" width="16" height="16" viewBox="0 0 16 16"><path d="M2 1 L14 8 L2 15 L5 8 Z" fill="none" stroke="#333" stroke-width="2"/></svg>
<svg style="left:425px;top:1028px" width="9" height="9" viewBox="0 0 9 9"><path d="M1.5 1.5 L7.5 7.5 M7.5 1.5 L1.5 7.5" stroke="#111" stroke-width="1.6"/></svg>
<svg style="left:460px;top:1024px" width="16" height="16" viewBox="0 0 16 16"><path d="M6 0.5 H9 L10.5 2 V5 H6 Z" fill="#fafafa" stroke="#aaa"/><path d="M8 5 V7 M3 10 V7.5 H13 V10 M8 7 V10" stroke="#999" fill="none"/><rect x="0.5" y="10" width="4.5" height="5.5" fill="#fafafa" stroke="#aaa"/><rect x="5.8" y="10" width="4.5" height="5.5" fill="#fafafa" stroke="#aaa"/><rect x="11" y="10" width="4.5" height="5.5" fill="#fafafa" stroke="#aaa"/><rect x="2" y="12" width="1.5" height="2.5" fill="#60a0e0"/><rect x="7.3" y="12" width="1.5" height="2.5" fill="#f08040"/><rect x="12.5" y="12" width="1.5" height="2.5" fill="#60c060"/></svg>
<svg style="left:569px;top:1028px" width="9" height="9" viewBox="0 0 9 9"><path d="M1.5 1.5 L7.5 7.5 M7.5 1.5 L1.5 7.5" stroke="#111" stroke-width="1.6"/></svg>
<svg style="left:1830px;top:776px" width="16" height="16" viewBox="0 0 16 16"><path d="M0.5 0.5 H7 L9 2.5 V10 H0.5 Z" fill="#c8c8c8"/><path d="M6 5 H13 L15.5 7.5 V15.5 H6 Z" fill="#b0b0b0"/></svg>
<svg style="left:1852px;top:776px" width="16" height="16" viewBox="0 0 16 16"><path d="M1 3 Q1 0.5 5 0.5 H10 Q14 0.5 14 3 V15.5 H1 Z" fill="#a8a8a8"/><path d="M4 4 Q4 2.5 7 2.5 H12 Q16 2.5 16 5 V15.5 H4 Z" fill="#b4b4b4"/></svg>
<div style="left:1875px;top:776px;width:1px;height:17px;background:#c6c6c6;"></div>
<svg style="left:1879px;top:781px" width="11" height="7" viewBox="0 0 11 7"><path d="M0 0 H11 L5.5 7 Z" fill="#000"/></svg>
<svg style="left:1899px;top:777px" width="13" height="13" viewBox="0 0 13 13"><path d="M1.5 1.5 L11.5 11.5 M11.5 1.5 L1.5 11.5" stroke="#000" stroke-width="2.4" stroke-linecap="butt"/></svg>
<svg style="left:682px;top:1024px" width="16" height="16" viewBox="0 0 16 16"><circle cx="8" cy="8" r="7" fill="#fff4d8" stroke="#c0a060" stroke-width="1.2"/><circle cx="8" cy="8" r="5" fill="#d8e8fa" stroke="#5080c0"/><path d="M8 4.5 V8 L10.5 9.5" stroke="#3060a0" stroke-width="1.2" fill="none"/></svg>
<svg style="left:740px;top:1028px" width="9" height="9" viewBox="0 0 9 9"><path d="M1.5 1.5 L7.5 7.5 M7.5 1.5 L1.5 7.5" stroke="#111" stroke-width="1.6"/></svg>
<svg style="left:777px;top:1024px" width="16" height="16" viewBox="0 0 16 16"><path d="M2.5 0.5 H10 L13.5 4 V15.5 H2.5 Z" fill="#fff8e0" stroke="#c09040"/><path d="M4.5 6 H11.5 M4.5 8.5 H11.5 M4.5 11 H11.5" stroke="#6080c0" stroke-width="1"/></svg>
<svg style="left:906px;top:1028px" width="9" height="9" viewBox="0 0 9 9"><path d="M1.5 1.5 L7.5 7.5 M7.5 1.5 L1.5 7.5" stroke="#111" stroke-width="1.6"/></svg>
<svg style="left:942px;top:1024px" width="16" height="16" viewBox="0 0 16 16"><ellipse cx="7.5" cy="9" rx="4" ry="5.2" fill="#3060b0" transform="rotate(35 7.5 9)"/><circle cx="11" cy="4.5" r="2" fill="#3060b0"/><path d="M3 5 L6 7 M1 9 L5 9.5 M2 13 L5 11.5 M9 15 L8 12.5 M13 12 L10.5 10.5 M14 8 L11 8" stroke="#3060b0" stroke-width="1.2"/><path d="M12 1 L15 3 L12.5 4.5 Z" fill="#20a020"/></svg>
<svg style="left:1021px;top:1028px" width="9" height="9" viewBox="0 0 9 9"><path d="M1.5 1.5 L7.5 7.5 M7.5 1.5 L1.5 7.5" stroke="#111" stroke-width="1.6"/></svg>
<svg style="left:1124px;top:1028px" width="9" height="9" viewBox="0 0 9 9"><path d="M1.5 1.5 L7.5 7.5 M7.5 1.5 L1.5 7.5" stroke="#111" stroke-width="1.6"/></svg>
<svg style="left:4px;top:1056px" width="16" height="16" viewBox="0 0 16 16"><circle cx="8" cy="8" r="7.2" fill="#f4f4f4" stroke="#777" stroke-width="1"/><path d="M3 12 C4 6, 8 3, 13 4 L10 7 L12 9 L8 9 L6 13 Z" fill="#d02020"/></svg>
</body></html>
